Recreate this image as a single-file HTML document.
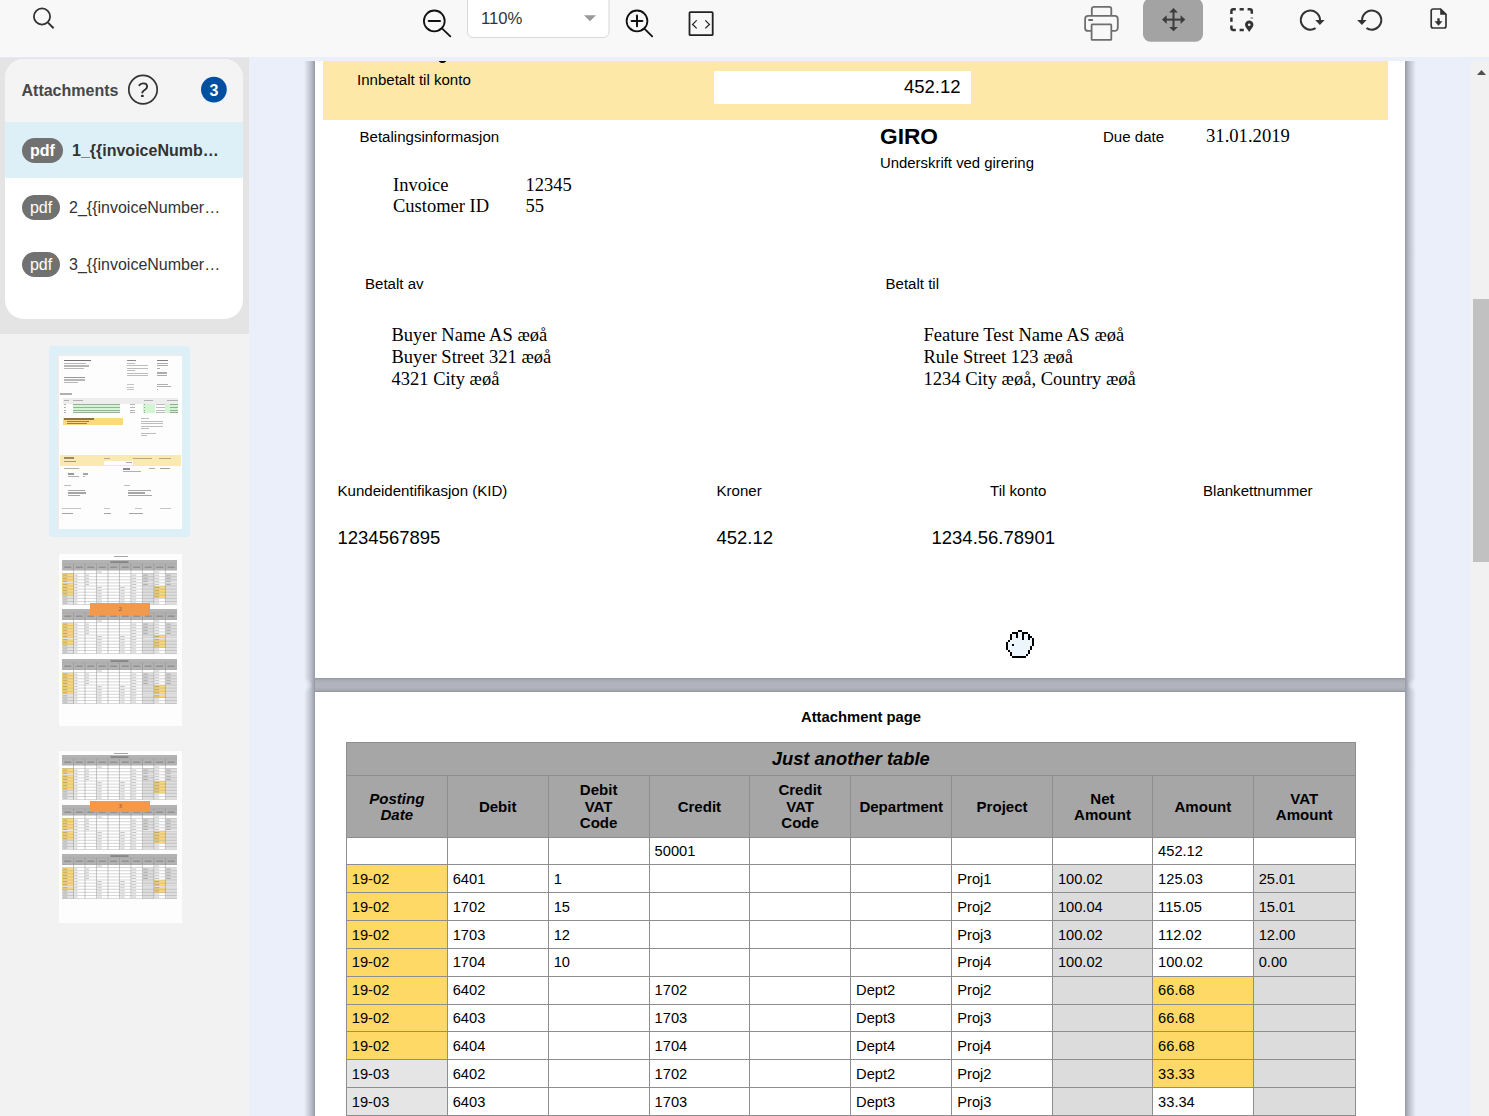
<!DOCTYPE html>
<html><head><meta charset="utf-8">
<style>
*{box-sizing:border-box;margin:0;padding:0}
html,body{width:1489px;height:1116px;overflow:hidden;background:#ebeffa;font-family:"Liberation Sans",sans-serif;color:#000}
.a{position:absolute}
.t{position:absolute;white-space:nowrap;line-height:1}
#tb{left:0;top:0;width:1489px;height:57px;background:#f8f8f8}
#sb{left:0;top:57px;width:249px;height:1059px;background:#f2f2f2}
#sbtop{left:0;top:57px;width:249px;height:277px;background:#e4e4e4}
#card{left:5px;top:59px;width:238px;height:260px;border-radius:19px;overflow:hidden;background:#fff}
#cardh{left:0;top:0;width:238px;height:63px;background:#f4f4f4}
.sel{left:0;top:63px;width:238px;height:56px;background:#ddf0f8}
.pill{position:absolute;height:25px;border-radius:12.5px;background:#717171;color:#fff;font-size:16px;line-height:25px;text-align:center}
.fname{position:absolute;font-size:16px;color:#333;line-height:1;white-space:nowrap}
/* main */
#main{left:249px;top:57px;width:1240px;height:1059px;background:#ebeffa;overflow:hidden}
.shadow{position:absolute}
#scroll{left:1471px;top:61px;width:18px;height:1055px;background:#f1f1f1}
#thumb{left:1473px;top:299px;width:16px;height:263px;background:#c1c1c1}
.page{position:absolute;background:#fff}
.sans{font-family:"Liberation Sans",sans-serif}
.serif{font-family:"Liberation Serif",serif}
</style></head>
<body>
<!-- toolbar -->
<div id="tb" class="a"></div>
<svg class="a" style="left:0;top:0" width="1489" height="57" viewBox="0 0 1489 57">
 <!-- search -->
 <g fill="none" stroke="#333" stroke-width="1.8">
  <circle cx="42" cy="16.5" r="8.1"/>
  <line x1="48" y1="22.6" x2="53.6" y2="28.2" stroke-linecap="butt" stroke-width="2"/>
 </g>
 <!-- zoom out -->
 <g fill="none" stroke="#111" stroke-width="1.8" stroke-linecap="round">
  <circle cx="434.3" cy="20.9" r="10.4"/>
  <line x1="428.7" y1="20.9" x2="440" y2="20.9" stroke-width="2"/>
  <line x1="442" y1="28.4" x2="450.3" y2="36.3"/>
 </g>
 <!-- zoom box -->
 <rect x="467.5" y="-6" width="141.5" height="43.5" rx="5.5" fill="#fff" stroke="#d9d9d9" stroke-width="1"/>
 <polygon points="584,15.2 596,15.2 590,21.2" fill="#9a9a9a"/>
 <!-- zoom in -->
 <g fill="none" stroke="#111" stroke-width="1.8" stroke-linecap="round">
  <circle cx="637" cy="20.9" r="10.4"/>
  <line x1="631.6" y1="20.9" x2="642.4" y2="20.9" stroke-width="2"/>
  <line x1="637" y1="15.5" x2="637" y2="26.3" stroke-width="2"/>
  <line x1="644.6" y1="28.8" x2="652.2" y2="36.3"/>
 </g>
 <!-- fit width -->
 <g fill="none" stroke="#222">
  <rect x="689.5" y="12.2" width="23.2" height="23" rx="0.8" stroke-width="1.8"/>
  <polyline points="696.7,20.4 692.6,24.4 696.7,28.4" stroke-width="1.3"/>
  <polyline points="705.3,20.4 709.4,24.4 705.3,28.4" stroke-width="1.3"/>
 </g>
 <!-- printer -->
 <g fill="none" stroke="#6e6e6e" stroke-width="1.8">
  <path d="M1091.8,15.9 V9 a2.2,2.2 0 0 1 2.2,-2.2 H1109.1 a2.2,2.2 0 0 1 2.2,2.2 V15.9"/>
  <path d="M1091.6,30.9 H1088.1 a3,3 0 0 1 -3,-3 V18.9 a3,3 0 0 1 3,-3 H1114.8 a3,3 0 0 1 3,3 V27.9 a3,3 0 0 1 -3,3 H1111.3"/>
  <rect x="1091.6" y="24.4" width="19.7" height="15.5" rx="0.6" fill="#f8f8f8"/>
  <line x1="1089" y1="20" x2="1092.2" y2="20" stroke-width="2" stroke-linecap="round"/>
 </g>
 <!-- move (active) -->
 <rect x="1143" y="-1.5" width="60" height="43.3" rx="7.5" fill="#a3a3a3"/>
 <g fill="#3c3c3c">
  <rect x="1172.5" y="11.5" width="2" height="16.5"/>
  <rect x="1165.5" y="18.6" width="16" height="2"/>
  <polygon points="1173.5,8 1169.1,12.6 1177.9,12.6"/>
  <polygon points="1173.5,31.3 1169.1,26.9 1177.9,26.9"/>
  <polygon points="1162,19.6 1166.7,15.2 1166.7,24"/>
  <polygon points="1185.3,19.6 1180.6,15.2 1180.6,24"/>
 </g>
 <!-- select area -->
 <g fill="none" stroke="#333" stroke-width="2.5">
  <path d="M1231.4,13.9 V11.2 a1.9,1.9 0 0 1 1.9,-1.9 H1235.8"/>
  <path d="M1239.6,9.3 H1243.8"/>
  <path d="M1247.6,9.3 H1249.9 a1.9,1.9 0 0 1 1.9,1.9 V13.8"/>
  <path d="M1231.4,17.5 V21.8"/>
  <path d="M1231.4,25.6 V28.1 a1.9,1.9 0 0 0 1.9,1.9 H1235.8"/>
  <path d="M1239.6,30 H1243.8"/>
  <path d="M1251.8,17.6 V18.4"/>
 </g>
 <path d="M1249.2,32 C1247.6,29.4 1245,27 1245,24.8 a4.2,4.2 0 0 1 8.4,0 C1253.4,27 1250.8,29.4 1249.2,32 Z" fill="#333"/>
 <circle cx="1249.2" cy="24.8" r="1.3" fill="#f8f8f8"/>
 <!-- rotate cw -->
 <g fill="none" stroke="#333" stroke-width="2">
  <path d="M1315.6,28.2 A9.6,9.6 0 1 1 1320,20.1"/>
 </g>
 <polygon points="1315.2,20.1 1324.6,20.1 1319.9,24.9" fill="#333"/>
 <!-- rotate ccw -->
 <g fill="none" stroke="#333" stroke-width="2">
  <path d="M1366.5,28.2 A9.6,9.6 0 1 0 1362.1,20.1"/>
 </g>
 <polygon points="1357.2,20.1 1366.6,20.1 1361.9,24.9" fill="#333"/>
 <!-- download -->
 <g fill="none" stroke="#333" stroke-width="1.7" stroke-linejoin="round">
  <path d="M1440.6,9 H1433.2 a2,2 0 0 0 -2,2 V26 a2,2 0 0 0 2,2 H1444 a2,2 0 0 0 2,-2 V14.4 Z"/>
 </g>
 <polygon points="1440.2,8.6 1446.6,14.8 1440.2,14.8" fill="#333"/>
 <rect x="1437.3" y="18.3" width="2.4" height="4.5" fill="#333"/>
 <polygon points="1434.5,21.3 1442.5,21.3 1438.5,25.8" fill="#333"/>
</svg>
<div class="t" style="left:481px;top:10.5px;font-size:16.7px;color:#333">110%</div>

<!-- sidebar -->
<div id="sb" class="a"></div>
<div id="sbtop" class="a"></div>
<div class="a" style="left:0;top:57px;width:249px;height:1px;background:#e6e9f0"></div>
<div id="card" class="a">
  <div id="cardh" class="a"></div>
  <div class="a sel"></div>
</div>
<div class="t" style="left:21.5px;top:83.3px;font-size:16px;font-weight:700;color:#474747">Attachments</div>
<svg class="a" style="left:125px;top:72px" width="110" height="36" viewBox="125 72 110 36">
 <circle cx="143" cy="89.6" r="14.2" fill="none" stroke="#333" stroke-width="1.7"/>
 <circle cx="213.9" cy="89.6" r="12.9" fill="#0050a1"/>
 <path d="M139.4,85.2 C140.5,83.9 142,83.4 143.5,83.4 C145.7,83.4 147.1,84.8 147.1,86.7 C147.1,88.4 145.9,89.2 144.6,90 C143.3,90.8 142.6,91.6 142.3,92.6" fill="none" stroke="#2e2e2e" stroke-width="1.9" stroke-linecap="round"/>
 <ellipse cx="142.4" cy="95.9" rx="1.5" ry="1.2" fill="#2e2e2e"/>
</svg>

<div class="t" style="left:209.5px;top:82.5px;font-size:16px;font-weight:700;color:#fff">3</div>
<div class="pill" style="left:22px;top:138px;width:41px;font-weight:700">pdf</div>
<div class="fname" style="left:72px;top:143px;font-weight:700">1_{{invoiceNumb…</div>
<div class="pill" style="left:22px;top:195px;width:38px">pdf</div>
<div class="fname" style="left:69px;top:200px">2_{{invoiceNumber…</div>
<div class="pill" style="left:22px;top:252px;width:38px">pdf</div>
<div class="fname" style="left:69px;top:257px">3_{{invoiceNumber…</div>

<!--THUMBS-->
<div class="a" style="left:49.00px;top:346.00px;width:141.00px;height:191.00px;background:#ddf0f8;border-radius:3px"></div>
<div class="a" style="left:57.00px;top:354.00px;width:125.00px;height:175.00px;background:#ececec;"></div>
<div class="a" style="left:58.50px;top:355.50px;width:123.50px;height:173.50px;background:#fdfdfd;"></div>
<div class="a" style="left:63.70px;top:359.60px;width:27.10px;height:1.70px;background:rgba(0,0,0,.55);"></div>
<div class="a" style="left:63.70px;top:362.80px;width:22.30px;height:1.30px;background:rgba(0,0,0,.28);"></div>
<div class="a" style="left:63.70px;top:365.30px;width:25.80px;height:1.30px;background:rgba(0,0,0,.28);"></div>
<div class="a" style="left:63.70px;top:367.70px;width:20.10px;height:1.30px;background:rgba(0,0,0,.28);"></div>
<div class="a" style="left:63.70px;top:376.80px;width:21.40px;height:1.50px;background:rgba(0,0,0,.4);"></div>
<div class="a" style="left:63.70px;top:379.30px;width:21.00px;height:1.30px;background:rgba(0,0,0,.28);"></div>
<div class="a" style="left:63.70px;top:381.60px;width:14.50px;height:1.30px;background:rgba(0,0,0,.28);"></div>
<div class="a" style="left:127.10px;top:362.90px;width:8.00px;height:1.20px;background:rgba(0,0,0,.25);"></div>
<div class="a" style="left:127.10px;top:365.30px;width:20.50px;height:1.20px;background:rgba(0,0,0,.25);"></div>
<div class="a" style="left:127.10px;top:367.70px;width:20.50px;height:1.20px;background:rgba(0,0,0,.25);"></div>
<div class="a" style="left:127.10px;top:370.00px;width:8.00px;height:1.20px;background:rgba(0,0,0,.25);"></div>
<div class="a" style="left:127.10px;top:372.50px;width:20.50px;height:1.20px;background:rgba(0,0,0,.25);"></div>
<div class="a" style="left:127.10px;top:374.80px;width:20.50px;height:1.20px;background:rgba(0,0,0,.25);"></div>
<div class="a" style="left:127.10px;top:359.60px;width:9.20px;height:1.50px;background:rgba(0,0,0,.45);"></div>
<div class="a" style="left:157.20px;top:359.50px;width:11.00px;height:1.60px;background:rgba(0,0,0,.5);"></div>
<div class="a" style="left:157.20px;top:362.70px;width:11.00px;height:1.30px;background:rgba(0,0,0,.32);"></div>
<div class="a" style="left:157.20px;top:365.10px;width:10.50px;height:1.30px;background:rgba(0,0,0,.32);"></div>
<div class="a" style="left:157.20px;top:367.50px;width:3.00px;height:1.30px;background:rgba(0,0,0,.32);"></div>
<div class="a" style="left:157.20px;top:372.40px;width:10.00px;height:1.30px;background:rgba(0,0,0,.32);"></div>
<div class="a" style="left:157.20px;top:374.80px;width:9.50px;height:1.30px;background:rgba(0,0,0,.32);"></div>
<div class="a" style="left:127.10px;top:384.20px;width:7.30px;height:1.10px;background:rgba(0,0,0,.22);"></div>
<div class="a" style="left:127.10px;top:386.60px;width:7.30px;height:1.10px;background:rgba(0,0,0,.22);"></div>
<div class="a" style="left:127.10px;top:389.00px;width:7.30px;height:1.10px;background:rgba(0,0,0,.22);"></div>
<div class="a" style="left:157.20px;top:383.80px;width:10.50px;height:1.20px;background:rgba(0,0,0,.3);"></div>
<div class="a" style="left:157.20px;top:386.30px;width:13.50px;height:1.20px;background:rgba(0,0,0,.3);"></div>
<div class="a" style="left:157.20px;top:388.80px;width:1.00px;height:1.20px;background:rgba(0,0,0,.3);"></div>
<div class="a" style="left:59.80px;top:393.40px;width:12.70px;height:1.50px;background:rgba(0,0,0,.3);"></div>
<div class="a" style="left:62.90px;top:398.00px;width:115.20px;height:5.70px;background:#ededed;"></div>
<div class="a" style="left:72.90px;top:403.70px;width:47.60px;height:9.20px;background:#d3f5d3;"></div>
<div class="a" style="left:143.20px;top:403.70px;width:11.80px;height:9.20px;background:#d3f5d3;"></div>
<div class="a" style="left:164.60px;top:403.70px;width:13.50px;height:9.20px;background:#d3f5d3;"></div>
<div class="a" style="left:63.70px;top:404.40px;width:2.50px;height:1.00px;background:rgba(0,0,0,.3);"></div>
<div class="a" style="left:73.20px;top:404.40px;width:47.00px;height:1.00px;background:rgba(0,0,0,.28);"></div>
<div class="a" style="left:129.80px;top:404.40px;width:5.50px;height:1.00px;background:rgba(0,0,0,.28);"></div>
<div class="a" style="left:143.50px;top:404.40px;width:1.50px;height:1.00px;background:rgba(0,0,0,.3);"></div>
<div class="a" style="left:156.00px;top:404.40px;width:8.50px;height:1.00px;background:rgba(0,0,0,.25);"></div>
<div class="a" style="left:169.50px;top:404.40px;width:8.50px;height:1.00px;background:rgba(0,0,0,.3);"></div>
<div class="a" style="left:63.70px;top:407.00px;width:2.50px;height:1.00px;background:rgba(0,0,0,.3);"></div>
<div class="a" style="left:73.20px;top:407.00px;width:47.00px;height:1.00px;background:rgba(0,0,0,.28);"></div>
<div class="a" style="left:129.80px;top:407.00px;width:5.50px;height:1.00px;background:rgba(0,0,0,.28);"></div>
<div class="a" style="left:143.50px;top:407.00px;width:1.50px;height:1.00px;background:rgba(0,0,0,.3);"></div>
<div class="a" style="left:156.00px;top:407.00px;width:8.50px;height:1.00px;background:rgba(0,0,0,.25);"></div>
<div class="a" style="left:169.50px;top:407.00px;width:8.50px;height:1.00px;background:rgba(0,0,0,.3);"></div>
<div class="a" style="left:63.70px;top:409.60px;width:2.50px;height:1.00px;background:rgba(0,0,0,.3);"></div>
<div class="a" style="left:73.20px;top:409.60px;width:47.00px;height:1.00px;background:rgba(0,0,0,.28);"></div>
<div class="a" style="left:129.80px;top:409.60px;width:5.50px;height:1.00px;background:rgba(0,0,0,.28);"></div>
<div class="a" style="left:143.50px;top:409.60px;width:1.50px;height:1.00px;background:rgba(0,0,0,.3);"></div>
<div class="a" style="left:156.00px;top:409.60px;width:8.50px;height:1.00px;background:rgba(0,0,0,.25);"></div>
<div class="a" style="left:169.50px;top:409.60px;width:8.50px;height:1.00px;background:rgba(0,0,0,.3);"></div>
<div class="a" style="left:63.70px;top:411.70px;width:2.50px;height:1.00px;background:rgba(0,0,0,.3);"></div>
<div class="a" style="left:73.20px;top:411.70px;width:47.00px;height:1.00px;background:rgba(0,0,0,.28);"></div>
<div class="a" style="left:129.80px;top:411.70px;width:5.50px;height:1.00px;background:rgba(0,0,0,.28);"></div>
<div class="a" style="left:143.50px;top:411.70px;width:1.50px;height:1.00px;background:rgba(0,0,0,.3);"></div>
<div class="a" style="left:156.00px;top:411.70px;width:8.50px;height:1.00px;background:rgba(0,0,0,.25);"></div>
<div class="a" style="left:169.50px;top:411.70px;width:8.50px;height:1.00px;background:rgba(0,0,0,.3);"></div>
<div class="a" style="left:63.50px;top:400.00px;width:5.00px;height:1.20px;background:rgba(0,0,0,.25);"></div>
<div class="a" style="left:73.00px;top:400.00px;width:10.00px;height:1.20px;background:rgba(0,0,0,.25);"></div>
<div class="a" style="left:143.50px;top:400.00px;width:9.00px;height:1.20px;background:rgba(0,0,0,.25);"></div>
<div class="a" style="left:167.00px;top:400.00px;width:11.00px;height:1.20px;background:rgba(0,0,0,.25);"></div>
<div class="a" style="left:63.30px;top:417.70px;width:59.40px;height:7.40px;background:#fdd97e;"></div>
<div class="a" style="left:64.30px;top:418.40px;width:30.00px;height:1.30px;background:rgba(0,0,0,.45);"></div>
<div class="a" style="left:67.00px;top:420.80px;width:22.00px;height:1.10px;background:rgba(0,0,0,.4);"></div>
<div class="a" style="left:67.00px;top:423.00px;width:20.00px;height:1.10px;background:rgba(0,0,0,.4);"></div>
<div class="a" style="left:141.00px;top:418.30px;width:8.00px;height:1.10px;background:rgba(0,0,0,.25);"></div>
<div class="a" style="left:141.00px;top:420.80px;width:21.50px;height:1.10px;background:rgba(0,0,0,.25);"></div>
<div class="a" style="left:141.00px;top:423.20px;width:21.50px;height:1.10px;background:rgba(0,0,0,.25);"></div>
<div class="a" style="left:141.00px;top:425.60px;width:21.50px;height:1.10px;background:rgba(0,0,0,.25);"></div>
<div class="a" style="left:141.00px;top:428.00px;width:8.00px;height:1.10px;background:rgba(0,0,0,.25);"></div>
<div class="a" style="left:141.00px;top:432.50px;width:15.00px;height:1.10px;background:rgba(0,0,0,.25);"></div>
<div class="a" style="left:141.00px;top:434.80px;width:6.00px;height:1.10px;background:rgba(0,0,0,.25);"></div>
<div class="a" style="left:60.00px;top:454.80px;width:120.80px;height:11.40px;background:#fbe9b2;"></div>
<div class="a" style="left:63.70px;top:457.00px;width:10.00px;height:2.00px;background:rgba(0,0,0,.4);"></div>
<div class="a" style="left:63.70px;top:461.00px;width:12.50px;height:1.30px;background:rgba(0,0,0,.35);"></div>
<div class="a" style="left:104.30px;top:461.00px;width:28.90px;height:3.50px;background:#ffffff;"></div>
<div class="a" style="left:125.80px;top:461.70px;width:6.50px;height:1.70px;background:rgba(0,0,0,.35);"></div>
<div class="a" style="left:104.30px;top:458.20px;width:5.50px;height:1.20px;background:rgba(0,0,0,.28);"></div>
<div class="a" style="left:133.10px;top:458.20px;width:18.70px;height:1.20px;background:rgba(0,0,0,.28);"></div>
<div class="a" style="left:159.40px;top:458.20px;width:11.70px;height:1.20px;background:rgba(0,0,0,.28);"></div>
<div class="a" style="left:63.70px;top:468.00px;width:15.80px;height:1.40px;background:rgba(0,0,0,.3);"></div>
<div class="a" style="left:123.10px;top:467.80px;width:6.50px;height:1.80px;background:rgba(0,0,0,.45);"></div>
<div class="a" style="left:148.50px;top:468.10px;width:6.50px;height:1.20px;background:rgba(0,0,0,.3);"></div>
<div class="a" style="left:160.30px;top:467.80px;width:9.50px;height:1.70px;background:rgba(0,0,0,.35);"></div>
<div class="a" style="left:123.10px;top:471.00px;width:17.50px;height:1.20px;background:rgba(0,0,0,.3);"></div>
<div class="a" style="left:68.00px;top:473.20px;width:6.00px;height:1.70px;background:rgba(0,0,0,.4);"></div>
<div class="a" style="left:83.00px;top:473.20px;width:5.00px;height:1.50px;background:rgba(0,0,0,.35);"></div>
<div class="a" style="left:67.50px;top:475.60px;width:11.00px;height:1.20px;background:rgba(0,0,0,.3);"></div>
<div class="a" style="left:83.00px;top:475.60px;width:2.00px;height:1.20px;background:rgba(0,0,0,.3);"></div>
<div class="a" style="left:64.20px;top:484.50px;width:7.00px;height:1.20px;background:rgba(0,0,0,.25);"></div>
<div class="a" style="left:123.60px;top:484.50px;width:6.20px;height:1.20px;background:rgba(0,0,0,.25);"></div>
<div class="a" style="left:67.70px;top:489.80px;width:17.50px;height:1.40px;background:rgba(0,0,0,.35);"></div>
<div class="a" style="left:127.50px;top:489.80px;width:23.50px;height:1.40px;background:rgba(0,0,0,.35);"></div>
<div class="a" style="left:67.70px;top:492.30px;width:18.50px;height:1.40px;background:rgba(0,0,0,.35);"></div>
<div class="a" style="left:127.50px;top:492.30px;width:17.00px;height:1.40px;background:rgba(0,0,0,.35);"></div>
<div class="a" style="left:67.70px;top:494.70px;width:12.00px;height:1.40px;background:rgba(0,0,0,.35);"></div>
<div class="a" style="left:127.50px;top:494.70px;width:24.00px;height:1.40px;background:rgba(0,0,0,.35);"></div>
<div class="a" style="left:61.50px;top:507.60px;width:19.00px;height:1.20px;background:rgba(0,0,0,.22);"></div>
<div class="a" style="left:104.30px;top:507.60px;width:5.40px;height:1.20px;background:rgba(0,0,0,.22);"></div>
<div class="a" style="left:135.40px;top:507.60px;width:6.50px;height:1.20px;background:rgba(0,0,0,.22);"></div>
<div class="a" style="left:159.80px;top:507.60px;width:11.70px;height:1.20px;background:rgba(0,0,0,.22);"></div>
<div class="a" style="left:62.00px;top:512.50px;width:11.00px;height:1.50px;background:rgba(0,0,0,.35);"></div>
<div class="a" style="left:104.30px;top:512.50px;width:7.00px;height:1.50px;background:rgba(0,0,0,.35);"></div>
<div class="a" style="left:128.80px;top:512.50px;width:13.90px;height:1.50px;background:rgba(0,0,0,.35);"></div>
<div class="a" style="left:58.90px;top:553.90px;width:122.70px;height:172.00px;background:#fdfdfd;"></div>
<div class="a" style="left:114.40px;top:555.70px;width:13.50px;height:1.50px;background:rgba(0,0,0,.35);"></div>
<div class="a" style="left:62.40px;top:559.60px;width:114.90px;height:10.50px;background:#b3b3b3;"></div>
<div class="a" style="left:62.40px;top:570.10px;width:11.49px;height:3.10px;background:#fff;"></div>
<div class="a" style="left:73.89px;top:570.10px;width:11.49px;height:3.10px;background:#fff;"></div>
<div class="a" style="left:85.38px;top:570.10px;width:11.49px;height:3.10px;background:#fff;"></div>
<div class="a" style="left:96.87px;top:570.10px;width:11.49px;height:3.10px;background:#fff;"></div>
<div class="a" style="left:108.36px;top:570.10px;width:11.49px;height:3.10px;background:#fff;"></div>
<div class="a" style="left:119.85px;top:570.10px;width:11.49px;height:3.10px;background:#fff;"></div>
<div class="a" style="left:131.34px;top:570.10px;width:11.49px;height:3.10px;background:#fff;"></div>
<div class="a" style="left:142.83px;top:570.10px;width:11.49px;height:3.10px;background:#fff;"></div>
<div class="a" style="left:154.32px;top:570.10px;width:11.49px;height:3.10px;background:#fff;"></div>
<div class="a" style="left:165.81px;top:570.10px;width:11.49px;height:3.10px;background:#fff;"></div>
<div class="a" style="left:62.40px;top:573.20px;width:11.49px;height:3.10px;background:#fcd878;"></div>
<div class="a" style="left:73.89px;top:573.20px;width:11.49px;height:3.10px;background:#fff;"></div>
<div class="a" style="left:85.38px;top:573.20px;width:11.49px;height:3.10px;background:#fff;"></div>
<div class="a" style="left:96.87px;top:573.20px;width:11.49px;height:3.10px;background:#fff;"></div>
<div class="a" style="left:108.36px;top:573.20px;width:11.49px;height:3.10px;background:#fff;"></div>
<div class="a" style="left:119.85px;top:573.20px;width:11.49px;height:3.10px;background:#fff;"></div>
<div class="a" style="left:131.34px;top:573.20px;width:11.49px;height:3.10px;background:#fff;"></div>
<div class="a" style="left:142.83px;top:573.20px;width:11.49px;height:3.10px;background:#dedede;"></div>
<div class="a" style="left:154.32px;top:573.20px;width:11.49px;height:3.10px;background:#fff;"></div>
<div class="a" style="left:165.81px;top:573.20px;width:11.49px;height:3.10px;background:#dedede;"></div>
<div class="a" style="left:62.40px;top:576.30px;width:11.49px;height:3.10px;background:#fcd878;"></div>
<div class="a" style="left:73.89px;top:576.30px;width:11.49px;height:3.10px;background:#fff;"></div>
<div class="a" style="left:85.38px;top:576.30px;width:11.49px;height:3.10px;background:#fff;"></div>
<div class="a" style="left:96.87px;top:576.30px;width:11.49px;height:3.10px;background:#fff;"></div>
<div class="a" style="left:108.36px;top:576.30px;width:11.49px;height:3.10px;background:#fff;"></div>
<div class="a" style="left:119.85px;top:576.30px;width:11.49px;height:3.10px;background:#fff;"></div>
<div class="a" style="left:131.34px;top:576.30px;width:11.49px;height:3.10px;background:#fff;"></div>
<div class="a" style="left:142.83px;top:576.30px;width:11.49px;height:3.10px;background:#dedede;"></div>
<div class="a" style="left:154.32px;top:576.30px;width:11.49px;height:3.10px;background:#fff;"></div>
<div class="a" style="left:165.81px;top:576.30px;width:11.49px;height:3.10px;background:#dedede;"></div>
<div class="a" style="left:62.40px;top:579.40px;width:11.49px;height:3.10px;background:#fcd878;"></div>
<div class="a" style="left:73.89px;top:579.40px;width:11.49px;height:3.10px;background:#fff;"></div>
<div class="a" style="left:85.38px;top:579.40px;width:11.49px;height:3.10px;background:#fff;"></div>
<div class="a" style="left:96.87px;top:579.40px;width:11.49px;height:3.10px;background:#fff;"></div>
<div class="a" style="left:108.36px;top:579.40px;width:11.49px;height:3.10px;background:#fff;"></div>
<div class="a" style="left:119.85px;top:579.40px;width:11.49px;height:3.10px;background:#fff;"></div>
<div class="a" style="left:131.34px;top:579.40px;width:11.49px;height:3.10px;background:#fff;"></div>
<div class="a" style="left:142.83px;top:579.40px;width:11.49px;height:3.10px;background:#dedede;"></div>
<div class="a" style="left:154.32px;top:579.40px;width:11.49px;height:3.10px;background:#fff;"></div>
<div class="a" style="left:165.81px;top:579.40px;width:11.49px;height:3.10px;background:#dedede;"></div>
<div class="a" style="left:62.40px;top:582.50px;width:11.49px;height:3.10px;background:#fcd878;"></div>
<div class="a" style="left:73.89px;top:582.50px;width:11.49px;height:3.10px;background:#fff;"></div>
<div class="a" style="left:85.38px;top:582.50px;width:11.49px;height:3.10px;background:#fff;"></div>
<div class="a" style="left:96.87px;top:582.50px;width:11.49px;height:3.10px;background:#fff;"></div>
<div class="a" style="left:108.36px;top:582.50px;width:11.49px;height:3.10px;background:#fff;"></div>
<div class="a" style="left:119.85px;top:582.50px;width:11.49px;height:3.10px;background:#fff;"></div>
<div class="a" style="left:131.34px;top:582.50px;width:11.49px;height:3.10px;background:#fff;"></div>
<div class="a" style="left:142.83px;top:582.50px;width:11.49px;height:3.10px;background:#dedede;"></div>
<div class="a" style="left:154.32px;top:582.50px;width:11.49px;height:3.10px;background:#fff;"></div>
<div class="a" style="left:165.81px;top:582.50px;width:11.49px;height:3.10px;background:#dedede;"></div>
<div class="a" style="left:62.40px;top:585.60px;width:11.49px;height:3.10px;background:#fcd878;"></div>
<div class="a" style="left:73.89px;top:585.60px;width:11.49px;height:3.10px;background:#fff;"></div>
<div class="a" style="left:85.38px;top:585.60px;width:11.49px;height:3.10px;background:#fff;"></div>
<div class="a" style="left:96.87px;top:585.60px;width:11.49px;height:3.10px;background:#fff;"></div>
<div class="a" style="left:108.36px;top:585.60px;width:11.49px;height:3.10px;background:#fff;"></div>
<div class="a" style="left:119.85px;top:585.60px;width:11.49px;height:3.10px;background:#fff;"></div>
<div class="a" style="left:131.34px;top:585.60px;width:11.49px;height:3.10px;background:#fff;"></div>
<div class="a" style="left:142.83px;top:585.60px;width:11.49px;height:3.10px;background:#dedede;"></div>
<div class="a" style="left:154.32px;top:585.60px;width:11.49px;height:3.10px;background:#fcd878;"></div>
<div class="a" style="left:165.81px;top:585.60px;width:11.49px;height:3.10px;background:#dedede;"></div>
<div class="a" style="left:62.40px;top:588.70px;width:11.49px;height:3.10px;background:#fcd878;"></div>
<div class="a" style="left:73.89px;top:588.70px;width:11.49px;height:3.10px;background:#fff;"></div>
<div class="a" style="left:85.38px;top:588.70px;width:11.49px;height:3.10px;background:#fff;"></div>
<div class="a" style="left:96.87px;top:588.70px;width:11.49px;height:3.10px;background:#fff;"></div>
<div class="a" style="left:108.36px;top:588.70px;width:11.49px;height:3.10px;background:#fff;"></div>
<div class="a" style="left:119.85px;top:588.70px;width:11.49px;height:3.10px;background:#fff;"></div>
<div class="a" style="left:131.34px;top:588.70px;width:11.49px;height:3.10px;background:#fff;"></div>
<div class="a" style="left:142.83px;top:588.70px;width:11.49px;height:3.10px;background:#dedede;"></div>
<div class="a" style="left:154.32px;top:588.70px;width:11.49px;height:3.10px;background:#fcd878;"></div>
<div class="a" style="left:165.81px;top:588.70px;width:11.49px;height:3.10px;background:#dedede;"></div>
<div class="a" style="left:62.40px;top:591.80px;width:11.49px;height:3.10px;background:#fcd878;"></div>
<div class="a" style="left:73.89px;top:591.80px;width:11.49px;height:3.10px;background:#fff;"></div>
<div class="a" style="left:85.38px;top:591.80px;width:11.49px;height:3.10px;background:#fff;"></div>
<div class="a" style="left:96.87px;top:591.80px;width:11.49px;height:3.10px;background:#fff;"></div>
<div class="a" style="left:108.36px;top:591.80px;width:11.49px;height:3.10px;background:#fff;"></div>
<div class="a" style="left:119.85px;top:591.80px;width:11.49px;height:3.10px;background:#fff;"></div>
<div class="a" style="left:131.34px;top:591.80px;width:11.49px;height:3.10px;background:#fff;"></div>
<div class="a" style="left:142.83px;top:591.80px;width:11.49px;height:3.10px;background:#dedede;"></div>
<div class="a" style="left:154.32px;top:591.80px;width:11.49px;height:3.10px;background:#fcd878;"></div>
<div class="a" style="left:165.81px;top:591.80px;width:11.49px;height:3.10px;background:#dedede;"></div>
<div class="a" style="left:62.40px;top:594.90px;width:11.49px;height:3.10px;background:#e3e3e3;"></div>
<div class="a" style="left:73.89px;top:594.90px;width:11.49px;height:3.10px;background:#fff;"></div>
<div class="a" style="left:85.38px;top:594.90px;width:11.49px;height:3.10px;background:#fff;"></div>
<div class="a" style="left:96.87px;top:594.90px;width:11.49px;height:3.10px;background:#fff;"></div>
<div class="a" style="left:108.36px;top:594.90px;width:11.49px;height:3.10px;background:#fff;"></div>
<div class="a" style="left:119.85px;top:594.90px;width:11.49px;height:3.10px;background:#fff;"></div>
<div class="a" style="left:131.34px;top:594.90px;width:11.49px;height:3.10px;background:#fff;"></div>
<div class="a" style="left:142.83px;top:594.90px;width:11.49px;height:3.10px;background:#dedede;"></div>
<div class="a" style="left:154.32px;top:594.90px;width:11.49px;height:3.10px;background:#fcd878;"></div>
<div class="a" style="left:165.81px;top:594.90px;width:11.49px;height:3.10px;background:#dedede;"></div>
<div class="a" style="left:62.40px;top:598.00px;width:11.49px;height:3.10px;background:#e3e3e3;"></div>
<div class="a" style="left:73.89px;top:598.00px;width:11.49px;height:3.10px;background:#fff;"></div>
<div class="a" style="left:85.38px;top:598.00px;width:11.49px;height:3.10px;background:#fff;"></div>
<div class="a" style="left:96.87px;top:598.00px;width:11.49px;height:3.10px;background:#fff;"></div>
<div class="a" style="left:108.36px;top:598.00px;width:11.49px;height:3.10px;background:#fff;"></div>
<div class="a" style="left:119.85px;top:598.00px;width:11.49px;height:3.10px;background:#fff;"></div>
<div class="a" style="left:131.34px;top:598.00px;width:11.49px;height:3.10px;background:#fff;"></div>
<div class="a" style="left:142.83px;top:598.00px;width:11.49px;height:3.10px;background:#dedede;"></div>
<div class="a" style="left:154.32px;top:598.00px;width:11.49px;height:3.10px;background:#fff;"></div>
<div class="a" style="left:165.81px;top:598.00px;width:11.49px;height:3.10px;background:#dedede;"></div>
<div class="a" style="left:62.40px;top:601.10px;width:11.49px;height:3.10px;background:#e3e3e3;"></div>
<div class="a" style="left:73.89px;top:601.10px;width:11.49px;height:3.10px;background:#fff;"></div>
<div class="a" style="left:85.38px;top:601.10px;width:11.49px;height:3.10px;background:#fff;"></div>
<div class="a" style="left:96.87px;top:601.10px;width:11.49px;height:3.10px;background:#fff;"></div>
<div class="a" style="left:108.36px;top:601.10px;width:11.49px;height:3.10px;background:#fff;"></div>
<div class="a" style="left:119.85px;top:601.10px;width:11.49px;height:3.10px;background:#fff;"></div>
<div class="a" style="left:131.34px;top:601.10px;width:11.49px;height:3.10px;background:#fff;"></div>
<div class="a" style="left:142.83px;top:601.10px;width:11.49px;height:3.10px;background:#dedede;"></div>
<div class="a" style="left:154.32px;top:601.10px;width:11.49px;height:3.10px;background:#fff;"></div>
<div class="a" style="left:165.81px;top:601.10px;width:11.49px;height:3.10px;background:#dedede;"></div>
<svg class="a" style="left:62.4px;top:559.6px" width="114.9" height="45" viewBox="0 0 114.9 45"><line x1="11.49" y1="3.9" x2="11.49" y2="44.6" stroke="#8a8a8a" stroke-width=".5"/><line x1="22.98" y1="3.9" x2="22.98" y2="44.6" stroke="#8a8a8a" stroke-width=".5"/><line x1="34.47" y1="3.9" x2="34.47" y2="44.6" stroke="#8a8a8a" stroke-width=".5"/><line x1="45.96" y1="3.9" x2="45.96" y2="44.6" stroke="#8a8a8a" stroke-width=".5"/><line x1="57.45" y1="3.9" x2="57.45" y2="44.6" stroke="#8a8a8a" stroke-width=".5"/><line x1="68.94" y1="3.9" x2="68.94" y2="44.6" stroke="#8a8a8a" stroke-width=".5"/><line x1="80.43" y1="3.9" x2="80.43" y2="44.6" stroke="#8a8a8a" stroke-width=".5"/><line x1="91.92" y1="3.9" x2="91.92" y2="44.6" stroke="#8a8a8a" stroke-width=".5"/><line x1="103.41" y1="3.9" x2="103.41" y2="44.6" stroke="#8a8a8a" stroke-width=".5"/><line x1="0" y1="10.50" x2="114.9" y2="10.50" stroke="#a0a0a0" stroke-width=".45"/><line x1="0" y1="13.60" x2="114.9" y2="13.60" stroke="#a0a0a0" stroke-width=".45"/><line x1="0" y1="16.70" x2="114.9" y2="16.70" stroke="#a0a0a0" stroke-width=".45"/><line x1="0" y1="19.80" x2="114.9" y2="19.80" stroke="#a0a0a0" stroke-width=".45"/><line x1="0" y1="22.90" x2="114.9" y2="22.90" stroke="#a0a0a0" stroke-width=".45"/><line x1="0" y1="26.00" x2="114.9" y2="26.00" stroke="#a0a0a0" stroke-width=".45"/><line x1="0" y1="29.10" x2="114.9" y2="29.10" stroke="#a0a0a0" stroke-width=".45"/><line x1="0" y1="32.20" x2="114.9" y2="32.20" stroke="#a0a0a0" stroke-width=".45"/><line x1="0" y1="35.30" x2="114.9" y2="35.30" stroke="#a0a0a0" stroke-width=".45"/><line x1="0" y1="38.40" x2="114.9" y2="38.40" stroke="#a0a0a0" stroke-width=".45"/><line x1="0" y1="41.50" x2="114.9" y2="41.50" stroke="#a0a0a0" stroke-width=".45"/><line x1="0" y1="44.60" x2="114.9" y2="44.60" stroke="#a0a0a0" stroke-width=".45"/><line x1="0" y1="3.9" x2="114.9" y2="3.9" stroke="#999" stroke-width=".35"/><rect x="48.45" y="1.4" width="18" height="1.3" fill="rgba(0,0,0,.35)"/><rect x="2.25" y="6.5" width="7" height="1.4" fill="rgba(0,0,0,.2)"/><rect x="13.73" y="6.5" width="7" height="1.4" fill="rgba(0,0,0,.2)"/><rect x="25.23" y="6.5" width="7" height="1.4" fill="rgba(0,0,0,.2)"/><rect x="36.71" y="6.5" width="7" height="1.4" fill="rgba(0,0,0,.2)"/><rect x="48.20" y="6.5" width="7" height="1.4" fill="rgba(0,0,0,.2)"/><rect x="59.70" y="6.5" width="7" height="1.4" fill="rgba(0,0,0,.2)"/><rect x="71.19" y="6.5" width="7" height="1.4" fill="rgba(0,0,0,.2)"/><rect x="82.68" y="6.5" width="7" height="1.4" fill="rgba(0,0,0,.2)"/><rect x="94.17" y="6.5" width="7" height="1.4" fill="rgba(0,0,0,.2)"/><rect x="105.66" y="6.5" width="7" height="1.4" fill="rgba(0,0,0,.2)"/><rect x="35.27" y="11.50" width="4.5" height="1.1" fill="rgba(0,0,0,.22)"/><rect x="92.72" y="11.50" width="4.5" height="1.1" fill="rgba(0,0,0,.22)"/><rect x="0.80" y="14.60" width="4.5" height="1.1" fill="rgba(0,0,0,.22)"/><rect x="12.29" y="14.60" width="3.2" height="1.1" fill="rgba(0,0,0,.22)"/><rect x="23.78" y="14.60" width="3.2" height="1.1" fill="rgba(0,0,0,.22)"/><rect x="69.74" y="14.60" width="4.5" height="1.1" fill="rgba(0,0,0,.22)"/><rect x="81.23" y="14.60" width="4.5" height="1.1" fill="rgba(0,0,0,.22)"/><rect x="92.72" y="14.60" width="4.5" height="1.1" fill="rgba(0,0,0,.22)"/><rect x="104.21" y="14.60" width="4.5" height="1.1" fill="rgba(0,0,0,.22)"/><rect x="0.80" y="17.70" width="4.5" height="1.1" fill="rgba(0,0,0,.22)"/><rect x="12.29" y="17.70" width="3.2" height="1.1" fill="rgba(0,0,0,.22)"/><rect x="23.78" y="17.70" width="3.2" height="1.1" fill="rgba(0,0,0,.22)"/><rect x="69.74" y="17.70" width="4.5" height="1.1" fill="rgba(0,0,0,.22)"/><rect x="81.23" y="17.70" width="4.5" height="1.1" fill="rgba(0,0,0,.22)"/><rect x="92.72" y="17.70" width="4.5" height="1.1" fill="rgba(0,0,0,.22)"/><rect x="104.21" y="17.70" width="4.5" height="1.1" fill="rgba(0,0,0,.22)"/><rect x="0.80" y="20.80" width="4.5" height="1.1" fill="rgba(0,0,0,.22)"/><rect x="12.29" y="20.80" width="3.2" height="1.1" fill="rgba(0,0,0,.22)"/><rect x="23.78" y="20.80" width="3.2" height="1.1" fill="rgba(0,0,0,.22)"/><rect x="69.74" y="20.80" width="4.5" height="1.1" fill="rgba(0,0,0,.22)"/><rect x="81.23" y="20.80" width="4.5" height="1.1" fill="rgba(0,0,0,.22)"/><rect x="92.72" y="20.80" width="4.5" height="1.1" fill="rgba(0,0,0,.22)"/><rect x="104.21" y="20.80" width="4.5" height="1.1" fill="rgba(0,0,0,.22)"/><rect x="0.80" y="23.90" width="4.5" height="1.1" fill="rgba(0,0,0,.22)"/><rect x="12.29" y="23.90" width="3.2" height="1.1" fill="rgba(0,0,0,.22)"/><rect x="23.78" y="23.90" width="3.2" height="1.1" fill="rgba(0,0,0,.22)"/><rect x="69.74" y="23.90" width="4.5" height="1.1" fill="rgba(0,0,0,.22)"/><rect x="81.23" y="23.90" width="4.5" height="1.1" fill="rgba(0,0,0,.22)"/><rect x="92.72" y="23.90" width="4.5" height="1.1" fill="rgba(0,0,0,.22)"/><rect x="104.21" y="23.90" width="4.5" height="1.1" fill="rgba(0,0,0,.22)"/><rect x="0.80" y="27.00" width="4.5" height="1.1" fill="rgba(0,0,0,.22)"/><rect x="12.29" y="27.00" width="3.2" height="1.1" fill="rgba(0,0,0,.22)"/><rect x="35.27" y="27.00" width="4.5" height="1.1" fill="rgba(0,0,0,.22)"/><rect x="58.25" y="27.00" width="4.5" height="1.1" fill="rgba(0,0,0,.22)"/><rect x="69.74" y="27.00" width="4.5" height="1.1" fill="rgba(0,0,0,.22)"/><rect x="92.72" y="27.00" width="4.5" height="1.1" fill="rgba(0,0,0,.22)"/><rect x="0.80" y="30.10" width="4.5" height="1.1" fill="rgba(0,0,0,.22)"/><rect x="12.29" y="30.10" width="3.2" height="1.1" fill="rgba(0,0,0,.22)"/><rect x="35.27" y="30.10" width="4.5" height="1.1" fill="rgba(0,0,0,.22)"/><rect x="58.25" y="30.10" width="4.5" height="1.1" fill="rgba(0,0,0,.22)"/><rect x="69.74" y="30.10" width="4.5" height="1.1" fill="rgba(0,0,0,.22)"/><rect x="92.72" y="30.10" width="4.5" height="1.1" fill="rgba(0,0,0,.22)"/><rect x="0.80" y="33.20" width="4.5" height="1.1" fill="rgba(0,0,0,.22)"/><rect x="12.29" y="33.20" width="3.2" height="1.1" fill="rgba(0,0,0,.22)"/><rect x="35.27" y="33.20" width="4.5" height="1.1" fill="rgba(0,0,0,.22)"/><rect x="58.25" y="33.20" width="4.5" height="1.1" fill="rgba(0,0,0,.22)"/><rect x="69.74" y="33.20" width="4.5" height="1.1" fill="rgba(0,0,0,.22)"/><rect x="92.72" y="33.20" width="4.5" height="1.1" fill="rgba(0,0,0,.22)"/><rect x="0.80" y="36.30" width="4.5" height="1.1" fill="rgba(0,0,0,.22)"/><rect x="12.29" y="36.30" width="3.2" height="1.1" fill="rgba(0,0,0,.22)"/><rect x="35.27" y="36.30" width="4.5" height="1.1" fill="rgba(0,0,0,.22)"/><rect x="58.25" y="36.30" width="4.5" height="1.1" fill="rgba(0,0,0,.22)"/><rect x="69.74" y="36.30" width="4.5" height="1.1" fill="rgba(0,0,0,.22)"/><rect x="92.72" y="36.30" width="4.5" height="1.1" fill="rgba(0,0,0,.22)"/><rect x="0.80" y="39.40" width="4.5" height="1.1" fill="rgba(0,0,0,.22)"/><rect x="12.29" y="39.40" width="3.2" height="1.1" fill="rgba(0,0,0,.22)"/><rect x="35.27" y="39.40" width="4.5" height="1.1" fill="rgba(0,0,0,.22)"/><rect x="58.25" y="39.40" width="4.5" height="1.1" fill="rgba(0,0,0,.22)"/><rect x="69.74" y="39.40" width="4.5" height="1.1" fill="rgba(0,0,0,.22)"/><rect x="92.72" y="39.40" width="4.5" height="1.1" fill="rgba(0,0,0,.22)"/><rect x="0.80" y="42.50" width="4.5" height="1.1" fill="rgba(0,0,0,.22)"/><rect x="12.29" y="42.50" width="3.2" height="1.1" fill="rgba(0,0,0,.22)"/><rect x="35.27" y="42.50" width="4.5" height="1.1" fill="rgba(0,0,0,.22)"/><rect x="58.25" y="42.50" width="4.5" height="1.1" fill="rgba(0,0,0,.22)"/><rect x="69.74" y="42.50" width="4.5" height="1.1" fill="rgba(0,0,0,.22)"/><rect x="92.72" y="42.50" width="4.5" height="1.1" fill="rgba(0,0,0,.22)"/></svg>
<div class="a" style="left:62.40px;top:609.40px;width:114.90px;height:10.50px;background:#b3b3b3;"></div>
<div class="a" style="left:62.40px;top:619.90px;width:11.49px;height:3.10px;background:#fff;"></div>
<div class="a" style="left:73.89px;top:619.90px;width:11.49px;height:3.10px;background:#fff;"></div>
<div class="a" style="left:85.38px;top:619.90px;width:11.49px;height:3.10px;background:#fff;"></div>
<div class="a" style="left:96.87px;top:619.90px;width:11.49px;height:3.10px;background:#fff;"></div>
<div class="a" style="left:108.36px;top:619.90px;width:11.49px;height:3.10px;background:#fff;"></div>
<div class="a" style="left:119.85px;top:619.90px;width:11.49px;height:3.10px;background:#fff;"></div>
<div class="a" style="left:131.34px;top:619.90px;width:11.49px;height:3.10px;background:#fff;"></div>
<div class="a" style="left:142.83px;top:619.90px;width:11.49px;height:3.10px;background:#fff;"></div>
<div class="a" style="left:154.32px;top:619.90px;width:11.49px;height:3.10px;background:#fff;"></div>
<div class="a" style="left:165.81px;top:619.90px;width:11.49px;height:3.10px;background:#fff;"></div>
<div class="a" style="left:62.40px;top:623.00px;width:11.49px;height:3.10px;background:#fcd878;"></div>
<div class="a" style="left:73.89px;top:623.00px;width:11.49px;height:3.10px;background:#fff;"></div>
<div class="a" style="left:85.38px;top:623.00px;width:11.49px;height:3.10px;background:#fff;"></div>
<div class="a" style="left:96.87px;top:623.00px;width:11.49px;height:3.10px;background:#fff;"></div>
<div class="a" style="left:108.36px;top:623.00px;width:11.49px;height:3.10px;background:#fff;"></div>
<div class="a" style="left:119.85px;top:623.00px;width:11.49px;height:3.10px;background:#fff;"></div>
<div class="a" style="left:131.34px;top:623.00px;width:11.49px;height:3.10px;background:#fff;"></div>
<div class="a" style="left:142.83px;top:623.00px;width:11.49px;height:3.10px;background:#dedede;"></div>
<div class="a" style="left:154.32px;top:623.00px;width:11.49px;height:3.10px;background:#fff;"></div>
<div class="a" style="left:165.81px;top:623.00px;width:11.49px;height:3.10px;background:#dedede;"></div>
<div class="a" style="left:62.40px;top:626.10px;width:11.49px;height:3.10px;background:#fcd878;"></div>
<div class="a" style="left:73.89px;top:626.10px;width:11.49px;height:3.10px;background:#fff;"></div>
<div class="a" style="left:85.38px;top:626.10px;width:11.49px;height:3.10px;background:#fff;"></div>
<div class="a" style="left:96.87px;top:626.10px;width:11.49px;height:3.10px;background:#fff;"></div>
<div class="a" style="left:108.36px;top:626.10px;width:11.49px;height:3.10px;background:#fff;"></div>
<div class="a" style="left:119.85px;top:626.10px;width:11.49px;height:3.10px;background:#fff;"></div>
<div class="a" style="left:131.34px;top:626.10px;width:11.49px;height:3.10px;background:#fff;"></div>
<div class="a" style="left:142.83px;top:626.10px;width:11.49px;height:3.10px;background:#dedede;"></div>
<div class="a" style="left:154.32px;top:626.10px;width:11.49px;height:3.10px;background:#fff;"></div>
<div class="a" style="left:165.81px;top:626.10px;width:11.49px;height:3.10px;background:#dedede;"></div>
<div class="a" style="left:62.40px;top:629.20px;width:11.49px;height:3.10px;background:#fcd878;"></div>
<div class="a" style="left:73.89px;top:629.20px;width:11.49px;height:3.10px;background:#fff;"></div>
<div class="a" style="left:85.38px;top:629.20px;width:11.49px;height:3.10px;background:#fff;"></div>
<div class="a" style="left:96.87px;top:629.20px;width:11.49px;height:3.10px;background:#fff;"></div>
<div class="a" style="left:108.36px;top:629.20px;width:11.49px;height:3.10px;background:#fff;"></div>
<div class="a" style="left:119.85px;top:629.20px;width:11.49px;height:3.10px;background:#fff;"></div>
<div class="a" style="left:131.34px;top:629.20px;width:11.49px;height:3.10px;background:#fff;"></div>
<div class="a" style="left:142.83px;top:629.20px;width:11.49px;height:3.10px;background:#dedede;"></div>
<div class="a" style="left:154.32px;top:629.20px;width:11.49px;height:3.10px;background:#fff;"></div>
<div class="a" style="left:165.81px;top:629.20px;width:11.49px;height:3.10px;background:#dedede;"></div>
<div class="a" style="left:62.40px;top:632.30px;width:11.49px;height:3.10px;background:#fcd878;"></div>
<div class="a" style="left:73.89px;top:632.30px;width:11.49px;height:3.10px;background:#fff;"></div>
<div class="a" style="left:85.38px;top:632.30px;width:11.49px;height:3.10px;background:#fff;"></div>
<div class="a" style="left:96.87px;top:632.30px;width:11.49px;height:3.10px;background:#fff;"></div>
<div class="a" style="left:108.36px;top:632.30px;width:11.49px;height:3.10px;background:#fff;"></div>
<div class="a" style="left:119.85px;top:632.30px;width:11.49px;height:3.10px;background:#fff;"></div>
<div class="a" style="left:131.34px;top:632.30px;width:11.49px;height:3.10px;background:#fff;"></div>
<div class="a" style="left:142.83px;top:632.30px;width:11.49px;height:3.10px;background:#dedede;"></div>
<div class="a" style="left:154.32px;top:632.30px;width:11.49px;height:3.10px;background:#fff;"></div>
<div class="a" style="left:165.81px;top:632.30px;width:11.49px;height:3.10px;background:#dedede;"></div>
<div class="a" style="left:62.40px;top:635.40px;width:11.49px;height:3.10px;background:#fcd878;"></div>
<div class="a" style="left:73.89px;top:635.40px;width:11.49px;height:3.10px;background:#fff;"></div>
<div class="a" style="left:85.38px;top:635.40px;width:11.49px;height:3.10px;background:#fff;"></div>
<div class="a" style="left:96.87px;top:635.40px;width:11.49px;height:3.10px;background:#fff;"></div>
<div class="a" style="left:108.36px;top:635.40px;width:11.49px;height:3.10px;background:#fff;"></div>
<div class="a" style="left:119.85px;top:635.40px;width:11.49px;height:3.10px;background:#fff;"></div>
<div class="a" style="left:131.34px;top:635.40px;width:11.49px;height:3.10px;background:#fff;"></div>
<div class="a" style="left:142.83px;top:635.40px;width:11.49px;height:3.10px;background:#dedede;"></div>
<div class="a" style="left:154.32px;top:635.40px;width:11.49px;height:3.10px;background:#fcd878;"></div>
<div class="a" style="left:165.81px;top:635.40px;width:11.49px;height:3.10px;background:#dedede;"></div>
<div class="a" style="left:62.40px;top:638.50px;width:11.49px;height:3.10px;background:#fcd878;"></div>
<div class="a" style="left:73.89px;top:638.50px;width:11.49px;height:3.10px;background:#fff;"></div>
<div class="a" style="left:85.38px;top:638.50px;width:11.49px;height:3.10px;background:#fff;"></div>
<div class="a" style="left:96.87px;top:638.50px;width:11.49px;height:3.10px;background:#fff;"></div>
<div class="a" style="left:108.36px;top:638.50px;width:11.49px;height:3.10px;background:#fff;"></div>
<div class="a" style="left:119.85px;top:638.50px;width:11.49px;height:3.10px;background:#fff;"></div>
<div class="a" style="left:131.34px;top:638.50px;width:11.49px;height:3.10px;background:#fff;"></div>
<div class="a" style="left:142.83px;top:638.50px;width:11.49px;height:3.10px;background:#dedede;"></div>
<div class="a" style="left:154.32px;top:638.50px;width:11.49px;height:3.10px;background:#fcd878;"></div>
<div class="a" style="left:165.81px;top:638.50px;width:11.49px;height:3.10px;background:#dedede;"></div>
<div class="a" style="left:62.40px;top:641.60px;width:11.49px;height:3.10px;background:#fcd878;"></div>
<div class="a" style="left:73.89px;top:641.60px;width:11.49px;height:3.10px;background:#fff;"></div>
<div class="a" style="left:85.38px;top:641.60px;width:11.49px;height:3.10px;background:#fff;"></div>
<div class="a" style="left:96.87px;top:641.60px;width:11.49px;height:3.10px;background:#fff;"></div>
<div class="a" style="left:108.36px;top:641.60px;width:11.49px;height:3.10px;background:#fff;"></div>
<div class="a" style="left:119.85px;top:641.60px;width:11.49px;height:3.10px;background:#fff;"></div>
<div class="a" style="left:131.34px;top:641.60px;width:11.49px;height:3.10px;background:#fff;"></div>
<div class="a" style="left:142.83px;top:641.60px;width:11.49px;height:3.10px;background:#dedede;"></div>
<div class="a" style="left:154.32px;top:641.60px;width:11.49px;height:3.10px;background:#fcd878;"></div>
<div class="a" style="left:165.81px;top:641.60px;width:11.49px;height:3.10px;background:#dedede;"></div>
<div class="a" style="left:62.40px;top:644.70px;width:11.49px;height:3.10px;background:#e3e3e3;"></div>
<div class="a" style="left:73.89px;top:644.70px;width:11.49px;height:3.10px;background:#fff;"></div>
<div class="a" style="left:85.38px;top:644.70px;width:11.49px;height:3.10px;background:#fff;"></div>
<div class="a" style="left:96.87px;top:644.70px;width:11.49px;height:3.10px;background:#fff;"></div>
<div class="a" style="left:108.36px;top:644.70px;width:11.49px;height:3.10px;background:#fff;"></div>
<div class="a" style="left:119.85px;top:644.70px;width:11.49px;height:3.10px;background:#fff;"></div>
<div class="a" style="left:131.34px;top:644.70px;width:11.49px;height:3.10px;background:#fff;"></div>
<div class="a" style="left:142.83px;top:644.70px;width:11.49px;height:3.10px;background:#dedede;"></div>
<div class="a" style="left:154.32px;top:644.70px;width:11.49px;height:3.10px;background:#fcd878;"></div>
<div class="a" style="left:165.81px;top:644.70px;width:11.49px;height:3.10px;background:#dedede;"></div>
<div class="a" style="left:62.40px;top:647.80px;width:11.49px;height:3.10px;background:#e3e3e3;"></div>
<div class="a" style="left:73.89px;top:647.80px;width:11.49px;height:3.10px;background:#fff;"></div>
<div class="a" style="left:85.38px;top:647.80px;width:11.49px;height:3.10px;background:#fff;"></div>
<div class="a" style="left:96.87px;top:647.80px;width:11.49px;height:3.10px;background:#fff;"></div>
<div class="a" style="left:108.36px;top:647.80px;width:11.49px;height:3.10px;background:#fff;"></div>
<div class="a" style="left:119.85px;top:647.80px;width:11.49px;height:3.10px;background:#fff;"></div>
<div class="a" style="left:131.34px;top:647.80px;width:11.49px;height:3.10px;background:#fff;"></div>
<div class="a" style="left:142.83px;top:647.80px;width:11.49px;height:3.10px;background:#dedede;"></div>
<div class="a" style="left:154.32px;top:647.80px;width:11.49px;height:3.10px;background:#fff;"></div>
<div class="a" style="left:165.81px;top:647.80px;width:11.49px;height:3.10px;background:#dedede;"></div>
<div class="a" style="left:62.40px;top:650.90px;width:11.49px;height:3.10px;background:#e3e3e3;"></div>
<div class="a" style="left:73.89px;top:650.90px;width:11.49px;height:3.10px;background:#fff;"></div>
<div class="a" style="left:85.38px;top:650.90px;width:11.49px;height:3.10px;background:#fff;"></div>
<div class="a" style="left:96.87px;top:650.90px;width:11.49px;height:3.10px;background:#fff;"></div>
<div class="a" style="left:108.36px;top:650.90px;width:11.49px;height:3.10px;background:#fff;"></div>
<div class="a" style="left:119.85px;top:650.90px;width:11.49px;height:3.10px;background:#fff;"></div>
<div class="a" style="left:131.34px;top:650.90px;width:11.49px;height:3.10px;background:#fff;"></div>
<div class="a" style="left:142.83px;top:650.90px;width:11.49px;height:3.10px;background:#dedede;"></div>
<div class="a" style="left:154.32px;top:650.90px;width:11.49px;height:3.10px;background:#fff;"></div>
<div class="a" style="left:165.81px;top:650.90px;width:11.49px;height:3.10px;background:#dedede;"></div>
<svg class="a" style="left:62.4px;top:609.4px" width="114.9" height="45" viewBox="0 0 114.9 45"><line x1="11.49" y1="3.9" x2="11.49" y2="44.6" stroke="#8a8a8a" stroke-width=".5"/><line x1="22.98" y1="3.9" x2="22.98" y2="44.6" stroke="#8a8a8a" stroke-width=".5"/><line x1="34.47" y1="3.9" x2="34.47" y2="44.6" stroke="#8a8a8a" stroke-width=".5"/><line x1="45.96" y1="3.9" x2="45.96" y2="44.6" stroke="#8a8a8a" stroke-width=".5"/><line x1="57.45" y1="3.9" x2="57.45" y2="44.6" stroke="#8a8a8a" stroke-width=".5"/><line x1="68.94" y1="3.9" x2="68.94" y2="44.6" stroke="#8a8a8a" stroke-width=".5"/><line x1="80.43" y1="3.9" x2="80.43" y2="44.6" stroke="#8a8a8a" stroke-width=".5"/><line x1="91.92" y1="3.9" x2="91.92" y2="44.6" stroke="#8a8a8a" stroke-width=".5"/><line x1="103.41" y1="3.9" x2="103.41" y2="44.6" stroke="#8a8a8a" stroke-width=".5"/><line x1="0" y1="10.50" x2="114.9" y2="10.50" stroke="#a0a0a0" stroke-width=".45"/><line x1="0" y1="13.60" x2="114.9" y2="13.60" stroke="#a0a0a0" stroke-width=".45"/><line x1="0" y1="16.70" x2="114.9" y2="16.70" stroke="#a0a0a0" stroke-width=".45"/><line x1="0" y1="19.80" x2="114.9" y2="19.80" stroke="#a0a0a0" stroke-width=".45"/><line x1="0" y1="22.90" x2="114.9" y2="22.90" stroke="#a0a0a0" stroke-width=".45"/><line x1="0" y1="26.00" x2="114.9" y2="26.00" stroke="#a0a0a0" stroke-width=".45"/><line x1="0" y1="29.10" x2="114.9" y2="29.10" stroke="#a0a0a0" stroke-width=".45"/><line x1="0" y1="32.20" x2="114.9" y2="32.20" stroke="#a0a0a0" stroke-width=".45"/><line x1="0" y1="35.30" x2="114.9" y2="35.30" stroke="#a0a0a0" stroke-width=".45"/><line x1="0" y1="38.40" x2="114.9" y2="38.40" stroke="#a0a0a0" stroke-width=".45"/><line x1="0" y1="41.50" x2="114.9" y2="41.50" stroke="#a0a0a0" stroke-width=".45"/><line x1="0" y1="44.60" x2="114.9" y2="44.60" stroke="#a0a0a0" stroke-width=".45"/><line x1="0" y1="3.9" x2="114.9" y2="3.9" stroke="#999" stroke-width=".35"/><rect x="48.45" y="1.4" width="18" height="1.3" fill="rgba(0,0,0,.35)"/><rect x="2.25" y="6.5" width="7" height="1.4" fill="rgba(0,0,0,.2)"/><rect x="13.73" y="6.5" width="7" height="1.4" fill="rgba(0,0,0,.2)"/><rect x="25.23" y="6.5" width="7" height="1.4" fill="rgba(0,0,0,.2)"/><rect x="36.71" y="6.5" width="7" height="1.4" fill="rgba(0,0,0,.2)"/><rect x="48.20" y="6.5" width="7" height="1.4" fill="rgba(0,0,0,.2)"/><rect x="59.70" y="6.5" width="7" height="1.4" fill="rgba(0,0,0,.2)"/><rect x="71.19" y="6.5" width="7" height="1.4" fill="rgba(0,0,0,.2)"/><rect x="82.68" y="6.5" width="7" height="1.4" fill="rgba(0,0,0,.2)"/><rect x="94.17" y="6.5" width="7" height="1.4" fill="rgba(0,0,0,.2)"/><rect x="105.66" y="6.5" width="7" height="1.4" fill="rgba(0,0,0,.2)"/><rect x="35.27" y="11.50" width="4.5" height="1.1" fill="rgba(0,0,0,.22)"/><rect x="92.72" y="11.50" width="4.5" height="1.1" fill="rgba(0,0,0,.22)"/><rect x="0.80" y="14.60" width="4.5" height="1.1" fill="rgba(0,0,0,.22)"/><rect x="12.29" y="14.60" width="3.2" height="1.1" fill="rgba(0,0,0,.22)"/><rect x="23.78" y="14.60" width="3.2" height="1.1" fill="rgba(0,0,0,.22)"/><rect x="69.74" y="14.60" width="4.5" height="1.1" fill="rgba(0,0,0,.22)"/><rect x="81.23" y="14.60" width="4.5" height="1.1" fill="rgba(0,0,0,.22)"/><rect x="92.72" y="14.60" width="4.5" height="1.1" fill="rgba(0,0,0,.22)"/><rect x="104.21" y="14.60" width="4.5" height="1.1" fill="rgba(0,0,0,.22)"/><rect x="0.80" y="17.70" width="4.5" height="1.1" fill="rgba(0,0,0,.22)"/><rect x="12.29" y="17.70" width="3.2" height="1.1" fill="rgba(0,0,0,.22)"/><rect x="23.78" y="17.70" width="3.2" height="1.1" fill="rgba(0,0,0,.22)"/><rect x="69.74" y="17.70" width="4.5" height="1.1" fill="rgba(0,0,0,.22)"/><rect x="81.23" y="17.70" width="4.5" height="1.1" fill="rgba(0,0,0,.22)"/><rect x="92.72" y="17.70" width="4.5" height="1.1" fill="rgba(0,0,0,.22)"/><rect x="104.21" y="17.70" width="4.5" height="1.1" fill="rgba(0,0,0,.22)"/><rect x="0.80" y="20.80" width="4.5" height="1.1" fill="rgba(0,0,0,.22)"/><rect x="12.29" y="20.80" width="3.2" height="1.1" fill="rgba(0,0,0,.22)"/><rect x="23.78" y="20.80" width="3.2" height="1.1" fill="rgba(0,0,0,.22)"/><rect x="69.74" y="20.80" width="4.5" height="1.1" fill="rgba(0,0,0,.22)"/><rect x="81.23" y="20.80" width="4.5" height="1.1" fill="rgba(0,0,0,.22)"/><rect x="92.72" y="20.80" width="4.5" height="1.1" fill="rgba(0,0,0,.22)"/><rect x="104.21" y="20.80" width="4.5" height="1.1" fill="rgba(0,0,0,.22)"/><rect x="0.80" y="23.90" width="4.5" height="1.1" fill="rgba(0,0,0,.22)"/><rect x="12.29" y="23.90" width="3.2" height="1.1" fill="rgba(0,0,0,.22)"/><rect x="23.78" y="23.90" width="3.2" height="1.1" fill="rgba(0,0,0,.22)"/><rect x="69.74" y="23.90" width="4.5" height="1.1" fill="rgba(0,0,0,.22)"/><rect x="81.23" y="23.90" width="4.5" height="1.1" fill="rgba(0,0,0,.22)"/><rect x="92.72" y="23.90" width="4.5" height="1.1" fill="rgba(0,0,0,.22)"/><rect x="104.21" y="23.90" width="4.5" height="1.1" fill="rgba(0,0,0,.22)"/><rect x="0.80" y="27.00" width="4.5" height="1.1" fill="rgba(0,0,0,.22)"/><rect x="12.29" y="27.00" width="3.2" height="1.1" fill="rgba(0,0,0,.22)"/><rect x="35.27" y="27.00" width="4.5" height="1.1" fill="rgba(0,0,0,.22)"/><rect x="58.25" y="27.00" width="4.5" height="1.1" fill="rgba(0,0,0,.22)"/><rect x="69.74" y="27.00" width="4.5" height="1.1" fill="rgba(0,0,0,.22)"/><rect x="92.72" y="27.00" width="4.5" height="1.1" fill="rgba(0,0,0,.22)"/><rect x="0.80" y="30.10" width="4.5" height="1.1" fill="rgba(0,0,0,.22)"/><rect x="12.29" y="30.10" width="3.2" height="1.1" fill="rgba(0,0,0,.22)"/><rect x="35.27" y="30.10" width="4.5" height="1.1" fill="rgba(0,0,0,.22)"/><rect x="58.25" y="30.10" width="4.5" height="1.1" fill="rgba(0,0,0,.22)"/><rect x="69.74" y="30.10" width="4.5" height="1.1" fill="rgba(0,0,0,.22)"/><rect x="92.72" y="30.10" width="4.5" height="1.1" fill="rgba(0,0,0,.22)"/><rect x="0.80" y="33.20" width="4.5" height="1.1" fill="rgba(0,0,0,.22)"/><rect x="12.29" y="33.20" width="3.2" height="1.1" fill="rgba(0,0,0,.22)"/><rect x="35.27" y="33.20" width="4.5" height="1.1" fill="rgba(0,0,0,.22)"/><rect x="58.25" y="33.20" width="4.5" height="1.1" fill="rgba(0,0,0,.22)"/><rect x="69.74" y="33.20" width="4.5" height="1.1" fill="rgba(0,0,0,.22)"/><rect x="92.72" y="33.20" width="4.5" height="1.1" fill="rgba(0,0,0,.22)"/><rect x="0.80" y="36.30" width="4.5" height="1.1" fill="rgba(0,0,0,.22)"/><rect x="12.29" y="36.30" width="3.2" height="1.1" fill="rgba(0,0,0,.22)"/><rect x="35.27" y="36.30" width="4.5" height="1.1" fill="rgba(0,0,0,.22)"/><rect x="58.25" y="36.30" width="4.5" height="1.1" fill="rgba(0,0,0,.22)"/><rect x="69.74" y="36.30" width="4.5" height="1.1" fill="rgba(0,0,0,.22)"/><rect x="92.72" y="36.30" width="4.5" height="1.1" fill="rgba(0,0,0,.22)"/><rect x="0.80" y="39.40" width="4.5" height="1.1" fill="rgba(0,0,0,.22)"/><rect x="12.29" y="39.40" width="3.2" height="1.1" fill="rgba(0,0,0,.22)"/><rect x="35.27" y="39.40" width="4.5" height="1.1" fill="rgba(0,0,0,.22)"/><rect x="58.25" y="39.40" width="4.5" height="1.1" fill="rgba(0,0,0,.22)"/><rect x="69.74" y="39.40" width="4.5" height="1.1" fill="rgba(0,0,0,.22)"/><rect x="92.72" y="39.40" width="4.5" height="1.1" fill="rgba(0,0,0,.22)"/><rect x="0.80" y="42.50" width="4.5" height="1.1" fill="rgba(0,0,0,.22)"/><rect x="12.29" y="42.50" width="3.2" height="1.1" fill="rgba(0,0,0,.22)"/><rect x="35.27" y="42.50" width="4.5" height="1.1" fill="rgba(0,0,0,.22)"/><rect x="58.25" y="42.50" width="4.5" height="1.1" fill="rgba(0,0,0,.22)"/><rect x="69.74" y="42.50" width="4.5" height="1.1" fill="rgba(0,0,0,.22)"/><rect x="92.72" y="42.50" width="4.5" height="1.1" fill="rgba(0,0,0,.22)"/></svg>
<div class="a" style="left:62.40px;top:659.20px;width:114.90px;height:10.50px;background:#b3b3b3;"></div>
<div class="a" style="left:62.40px;top:669.70px;width:11.49px;height:3.10px;background:#fff;"></div>
<div class="a" style="left:73.89px;top:669.70px;width:11.49px;height:3.10px;background:#fff;"></div>
<div class="a" style="left:85.38px;top:669.70px;width:11.49px;height:3.10px;background:#fff;"></div>
<div class="a" style="left:96.87px;top:669.70px;width:11.49px;height:3.10px;background:#fff;"></div>
<div class="a" style="left:108.36px;top:669.70px;width:11.49px;height:3.10px;background:#fff;"></div>
<div class="a" style="left:119.85px;top:669.70px;width:11.49px;height:3.10px;background:#fff;"></div>
<div class="a" style="left:131.34px;top:669.70px;width:11.49px;height:3.10px;background:#fff;"></div>
<div class="a" style="left:142.83px;top:669.70px;width:11.49px;height:3.10px;background:#fff;"></div>
<div class="a" style="left:154.32px;top:669.70px;width:11.49px;height:3.10px;background:#fff;"></div>
<div class="a" style="left:165.81px;top:669.70px;width:11.49px;height:3.10px;background:#fff;"></div>
<div class="a" style="left:62.40px;top:672.80px;width:11.49px;height:3.10px;background:#fcd878;"></div>
<div class="a" style="left:73.89px;top:672.80px;width:11.49px;height:3.10px;background:#fff;"></div>
<div class="a" style="left:85.38px;top:672.80px;width:11.49px;height:3.10px;background:#fff;"></div>
<div class="a" style="left:96.87px;top:672.80px;width:11.49px;height:3.10px;background:#fff;"></div>
<div class="a" style="left:108.36px;top:672.80px;width:11.49px;height:3.10px;background:#fff;"></div>
<div class="a" style="left:119.85px;top:672.80px;width:11.49px;height:3.10px;background:#fff;"></div>
<div class="a" style="left:131.34px;top:672.80px;width:11.49px;height:3.10px;background:#fff;"></div>
<div class="a" style="left:142.83px;top:672.80px;width:11.49px;height:3.10px;background:#dedede;"></div>
<div class="a" style="left:154.32px;top:672.80px;width:11.49px;height:3.10px;background:#fff;"></div>
<div class="a" style="left:165.81px;top:672.80px;width:11.49px;height:3.10px;background:#dedede;"></div>
<div class="a" style="left:62.40px;top:675.90px;width:11.49px;height:3.10px;background:#fcd878;"></div>
<div class="a" style="left:73.89px;top:675.90px;width:11.49px;height:3.10px;background:#fff;"></div>
<div class="a" style="left:85.38px;top:675.90px;width:11.49px;height:3.10px;background:#fff;"></div>
<div class="a" style="left:96.87px;top:675.90px;width:11.49px;height:3.10px;background:#fff;"></div>
<div class="a" style="left:108.36px;top:675.90px;width:11.49px;height:3.10px;background:#fff;"></div>
<div class="a" style="left:119.85px;top:675.90px;width:11.49px;height:3.10px;background:#fff;"></div>
<div class="a" style="left:131.34px;top:675.90px;width:11.49px;height:3.10px;background:#fff;"></div>
<div class="a" style="left:142.83px;top:675.90px;width:11.49px;height:3.10px;background:#dedede;"></div>
<div class="a" style="left:154.32px;top:675.90px;width:11.49px;height:3.10px;background:#fff;"></div>
<div class="a" style="left:165.81px;top:675.90px;width:11.49px;height:3.10px;background:#dedede;"></div>
<div class="a" style="left:62.40px;top:679.00px;width:11.49px;height:3.10px;background:#fcd878;"></div>
<div class="a" style="left:73.89px;top:679.00px;width:11.49px;height:3.10px;background:#fff;"></div>
<div class="a" style="left:85.38px;top:679.00px;width:11.49px;height:3.10px;background:#fff;"></div>
<div class="a" style="left:96.87px;top:679.00px;width:11.49px;height:3.10px;background:#fff;"></div>
<div class="a" style="left:108.36px;top:679.00px;width:11.49px;height:3.10px;background:#fff;"></div>
<div class="a" style="left:119.85px;top:679.00px;width:11.49px;height:3.10px;background:#fff;"></div>
<div class="a" style="left:131.34px;top:679.00px;width:11.49px;height:3.10px;background:#fff;"></div>
<div class="a" style="left:142.83px;top:679.00px;width:11.49px;height:3.10px;background:#dedede;"></div>
<div class="a" style="left:154.32px;top:679.00px;width:11.49px;height:3.10px;background:#fff;"></div>
<div class="a" style="left:165.81px;top:679.00px;width:11.49px;height:3.10px;background:#dedede;"></div>
<div class="a" style="left:62.40px;top:682.10px;width:11.49px;height:3.10px;background:#fcd878;"></div>
<div class="a" style="left:73.89px;top:682.10px;width:11.49px;height:3.10px;background:#fff;"></div>
<div class="a" style="left:85.38px;top:682.10px;width:11.49px;height:3.10px;background:#fff;"></div>
<div class="a" style="left:96.87px;top:682.10px;width:11.49px;height:3.10px;background:#fff;"></div>
<div class="a" style="left:108.36px;top:682.10px;width:11.49px;height:3.10px;background:#fff;"></div>
<div class="a" style="left:119.85px;top:682.10px;width:11.49px;height:3.10px;background:#fff;"></div>
<div class="a" style="left:131.34px;top:682.10px;width:11.49px;height:3.10px;background:#fff;"></div>
<div class="a" style="left:142.83px;top:682.10px;width:11.49px;height:3.10px;background:#dedede;"></div>
<div class="a" style="left:154.32px;top:682.10px;width:11.49px;height:3.10px;background:#fff;"></div>
<div class="a" style="left:165.81px;top:682.10px;width:11.49px;height:3.10px;background:#dedede;"></div>
<div class="a" style="left:62.40px;top:685.20px;width:11.49px;height:3.10px;background:#fcd878;"></div>
<div class="a" style="left:73.89px;top:685.20px;width:11.49px;height:3.10px;background:#fff;"></div>
<div class="a" style="left:85.38px;top:685.20px;width:11.49px;height:3.10px;background:#fff;"></div>
<div class="a" style="left:96.87px;top:685.20px;width:11.49px;height:3.10px;background:#fff;"></div>
<div class="a" style="left:108.36px;top:685.20px;width:11.49px;height:3.10px;background:#fff;"></div>
<div class="a" style="left:119.85px;top:685.20px;width:11.49px;height:3.10px;background:#fff;"></div>
<div class="a" style="left:131.34px;top:685.20px;width:11.49px;height:3.10px;background:#fff;"></div>
<div class="a" style="left:142.83px;top:685.20px;width:11.49px;height:3.10px;background:#dedede;"></div>
<div class="a" style="left:154.32px;top:685.20px;width:11.49px;height:3.10px;background:#fcd878;"></div>
<div class="a" style="left:165.81px;top:685.20px;width:11.49px;height:3.10px;background:#dedede;"></div>
<div class="a" style="left:62.40px;top:688.30px;width:11.49px;height:3.10px;background:#fcd878;"></div>
<div class="a" style="left:73.89px;top:688.30px;width:11.49px;height:3.10px;background:#fff;"></div>
<div class="a" style="left:85.38px;top:688.30px;width:11.49px;height:3.10px;background:#fff;"></div>
<div class="a" style="left:96.87px;top:688.30px;width:11.49px;height:3.10px;background:#fff;"></div>
<div class="a" style="left:108.36px;top:688.30px;width:11.49px;height:3.10px;background:#fff;"></div>
<div class="a" style="left:119.85px;top:688.30px;width:11.49px;height:3.10px;background:#fff;"></div>
<div class="a" style="left:131.34px;top:688.30px;width:11.49px;height:3.10px;background:#fff;"></div>
<div class="a" style="left:142.83px;top:688.30px;width:11.49px;height:3.10px;background:#dedede;"></div>
<div class="a" style="left:154.32px;top:688.30px;width:11.49px;height:3.10px;background:#fcd878;"></div>
<div class="a" style="left:165.81px;top:688.30px;width:11.49px;height:3.10px;background:#dedede;"></div>
<div class="a" style="left:62.40px;top:691.40px;width:11.49px;height:3.10px;background:#fcd878;"></div>
<div class="a" style="left:73.89px;top:691.40px;width:11.49px;height:3.10px;background:#fff;"></div>
<div class="a" style="left:85.38px;top:691.40px;width:11.49px;height:3.10px;background:#fff;"></div>
<div class="a" style="left:96.87px;top:691.40px;width:11.49px;height:3.10px;background:#fff;"></div>
<div class="a" style="left:108.36px;top:691.40px;width:11.49px;height:3.10px;background:#fff;"></div>
<div class="a" style="left:119.85px;top:691.40px;width:11.49px;height:3.10px;background:#fff;"></div>
<div class="a" style="left:131.34px;top:691.40px;width:11.49px;height:3.10px;background:#fff;"></div>
<div class="a" style="left:142.83px;top:691.40px;width:11.49px;height:3.10px;background:#dedede;"></div>
<div class="a" style="left:154.32px;top:691.40px;width:11.49px;height:3.10px;background:#fcd878;"></div>
<div class="a" style="left:165.81px;top:691.40px;width:11.49px;height:3.10px;background:#dedede;"></div>
<div class="a" style="left:62.40px;top:694.50px;width:11.49px;height:3.10px;background:#e3e3e3;"></div>
<div class="a" style="left:73.89px;top:694.50px;width:11.49px;height:3.10px;background:#fff;"></div>
<div class="a" style="left:85.38px;top:694.50px;width:11.49px;height:3.10px;background:#fff;"></div>
<div class="a" style="left:96.87px;top:694.50px;width:11.49px;height:3.10px;background:#fff;"></div>
<div class="a" style="left:108.36px;top:694.50px;width:11.49px;height:3.10px;background:#fff;"></div>
<div class="a" style="left:119.85px;top:694.50px;width:11.49px;height:3.10px;background:#fff;"></div>
<div class="a" style="left:131.34px;top:694.50px;width:11.49px;height:3.10px;background:#fff;"></div>
<div class="a" style="left:142.83px;top:694.50px;width:11.49px;height:3.10px;background:#dedede;"></div>
<div class="a" style="left:154.32px;top:694.50px;width:11.49px;height:3.10px;background:#fcd878;"></div>
<div class="a" style="left:165.81px;top:694.50px;width:11.49px;height:3.10px;background:#dedede;"></div>
<div class="a" style="left:62.40px;top:697.60px;width:11.49px;height:3.10px;background:#e3e3e3;"></div>
<div class="a" style="left:73.89px;top:697.60px;width:11.49px;height:3.10px;background:#fff;"></div>
<div class="a" style="left:85.38px;top:697.60px;width:11.49px;height:3.10px;background:#fff;"></div>
<div class="a" style="left:96.87px;top:697.60px;width:11.49px;height:3.10px;background:#fff;"></div>
<div class="a" style="left:108.36px;top:697.60px;width:11.49px;height:3.10px;background:#fff;"></div>
<div class="a" style="left:119.85px;top:697.60px;width:11.49px;height:3.10px;background:#fff;"></div>
<div class="a" style="left:131.34px;top:697.60px;width:11.49px;height:3.10px;background:#fff;"></div>
<div class="a" style="left:142.83px;top:697.60px;width:11.49px;height:3.10px;background:#dedede;"></div>
<div class="a" style="left:154.32px;top:697.60px;width:11.49px;height:3.10px;background:#fff;"></div>
<div class="a" style="left:165.81px;top:697.60px;width:11.49px;height:3.10px;background:#dedede;"></div>
<div class="a" style="left:62.40px;top:700.70px;width:11.49px;height:3.10px;background:#e3e3e3;"></div>
<div class="a" style="left:73.89px;top:700.70px;width:11.49px;height:3.10px;background:#fff;"></div>
<div class="a" style="left:85.38px;top:700.70px;width:11.49px;height:3.10px;background:#fff;"></div>
<div class="a" style="left:96.87px;top:700.70px;width:11.49px;height:3.10px;background:#fff;"></div>
<div class="a" style="left:108.36px;top:700.70px;width:11.49px;height:3.10px;background:#fff;"></div>
<div class="a" style="left:119.85px;top:700.70px;width:11.49px;height:3.10px;background:#fff;"></div>
<div class="a" style="left:131.34px;top:700.70px;width:11.49px;height:3.10px;background:#fff;"></div>
<div class="a" style="left:142.83px;top:700.70px;width:11.49px;height:3.10px;background:#dedede;"></div>
<div class="a" style="left:154.32px;top:700.70px;width:11.49px;height:3.10px;background:#fff;"></div>
<div class="a" style="left:165.81px;top:700.70px;width:11.49px;height:3.10px;background:#dedede;"></div>
<svg class="a" style="left:62.4px;top:659.2px" width="114.9" height="45" viewBox="0 0 114.9 45"><line x1="11.49" y1="3.9" x2="11.49" y2="44.6" stroke="#8a8a8a" stroke-width=".5"/><line x1="22.98" y1="3.9" x2="22.98" y2="44.6" stroke="#8a8a8a" stroke-width=".5"/><line x1="34.47" y1="3.9" x2="34.47" y2="44.6" stroke="#8a8a8a" stroke-width=".5"/><line x1="45.96" y1="3.9" x2="45.96" y2="44.6" stroke="#8a8a8a" stroke-width=".5"/><line x1="57.45" y1="3.9" x2="57.45" y2="44.6" stroke="#8a8a8a" stroke-width=".5"/><line x1="68.94" y1="3.9" x2="68.94" y2="44.6" stroke="#8a8a8a" stroke-width=".5"/><line x1="80.43" y1="3.9" x2="80.43" y2="44.6" stroke="#8a8a8a" stroke-width=".5"/><line x1="91.92" y1="3.9" x2="91.92" y2="44.6" stroke="#8a8a8a" stroke-width=".5"/><line x1="103.41" y1="3.9" x2="103.41" y2="44.6" stroke="#8a8a8a" stroke-width=".5"/><line x1="0" y1="10.50" x2="114.9" y2="10.50" stroke="#a0a0a0" stroke-width=".45"/><line x1="0" y1="13.60" x2="114.9" y2="13.60" stroke="#a0a0a0" stroke-width=".45"/><line x1="0" y1="16.70" x2="114.9" y2="16.70" stroke="#a0a0a0" stroke-width=".45"/><line x1="0" y1="19.80" x2="114.9" y2="19.80" stroke="#a0a0a0" stroke-width=".45"/><line x1="0" y1="22.90" x2="114.9" y2="22.90" stroke="#a0a0a0" stroke-width=".45"/><line x1="0" y1="26.00" x2="114.9" y2="26.00" stroke="#a0a0a0" stroke-width=".45"/><line x1="0" y1="29.10" x2="114.9" y2="29.10" stroke="#a0a0a0" stroke-width=".45"/><line x1="0" y1="32.20" x2="114.9" y2="32.20" stroke="#a0a0a0" stroke-width=".45"/><line x1="0" y1="35.30" x2="114.9" y2="35.30" stroke="#a0a0a0" stroke-width=".45"/><line x1="0" y1="38.40" x2="114.9" y2="38.40" stroke="#a0a0a0" stroke-width=".45"/><line x1="0" y1="41.50" x2="114.9" y2="41.50" stroke="#a0a0a0" stroke-width=".45"/><line x1="0" y1="44.60" x2="114.9" y2="44.60" stroke="#a0a0a0" stroke-width=".45"/><line x1="0" y1="3.9" x2="114.9" y2="3.9" stroke="#999" stroke-width=".35"/><rect x="48.45" y="1.4" width="18" height="1.3" fill="rgba(0,0,0,.35)"/><rect x="2.25" y="6.5" width="7" height="1.4" fill="rgba(0,0,0,.2)"/><rect x="13.73" y="6.5" width="7" height="1.4" fill="rgba(0,0,0,.2)"/><rect x="25.23" y="6.5" width="7" height="1.4" fill="rgba(0,0,0,.2)"/><rect x="36.71" y="6.5" width="7" height="1.4" fill="rgba(0,0,0,.2)"/><rect x="48.20" y="6.5" width="7" height="1.4" fill="rgba(0,0,0,.2)"/><rect x="59.70" y="6.5" width="7" height="1.4" fill="rgba(0,0,0,.2)"/><rect x="71.19" y="6.5" width="7" height="1.4" fill="rgba(0,0,0,.2)"/><rect x="82.68" y="6.5" width="7" height="1.4" fill="rgba(0,0,0,.2)"/><rect x="94.17" y="6.5" width="7" height="1.4" fill="rgba(0,0,0,.2)"/><rect x="105.66" y="6.5" width="7" height="1.4" fill="rgba(0,0,0,.2)"/><rect x="35.27" y="11.50" width="4.5" height="1.1" fill="rgba(0,0,0,.22)"/><rect x="92.72" y="11.50" width="4.5" height="1.1" fill="rgba(0,0,0,.22)"/><rect x="0.80" y="14.60" width="4.5" height="1.1" fill="rgba(0,0,0,.22)"/><rect x="12.29" y="14.60" width="3.2" height="1.1" fill="rgba(0,0,0,.22)"/><rect x="23.78" y="14.60" width="3.2" height="1.1" fill="rgba(0,0,0,.22)"/><rect x="69.74" y="14.60" width="4.5" height="1.1" fill="rgba(0,0,0,.22)"/><rect x="81.23" y="14.60" width="4.5" height="1.1" fill="rgba(0,0,0,.22)"/><rect x="92.72" y="14.60" width="4.5" height="1.1" fill="rgba(0,0,0,.22)"/><rect x="104.21" y="14.60" width="4.5" height="1.1" fill="rgba(0,0,0,.22)"/><rect x="0.80" y="17.70" width="4.5" height="1.1" fill="rgba(0,0,0,.22)"/><rect x="12.29" y="17.70" width="3.2" height="1.1" fill="rgba(0,0,0,.22)"/><rect x="23.78" y="17.70" width="3.2" height="1.1" fill="rgba(0,0,0,.22)"/><rect x="69.74" y="17.70" width="4.5" height="1.1" fill="rgba(0,0,0,.22)"/><rect x="81.23" y="17.70" width="4.5" height="1.1" fill="rgba(0,0,0,.22)"/><rect x="92.72" y="17.70" width="4.5" height="1.1" fill="rgba(0,0,0,.22)"/><rect x="104.21" y="17.70" width="4.5" height="1.1" fill="rgba(0,0,0,.22)"/><rect x="0.80" y="20.80" width="4.5" height="1.1" fill="rgba(0,0,0,.22)"/><rect x="12.29" y="20.80" width="3.2" height="1.1" fill="rgba(0,0,0,.22)"/><rect x="23.78" y="20.80" width="3.2" height="1.1" fill="rgba(0,0,0,.22)"/><rect x="69.74" y="20.80" width="4.5" height="1.1" fill="rgba(0,0,0,.22)"/><rect x="81.23" y="20.80" width="4.5" height="1.1" fill="rgba(0,0,0,.22)"/><rect x="92.72" y="20.80" width="4.5" height="1.1" fill="rgba(0,0,0,.22)"/><rect x="104.21" y="20.80" width="4.5" height="1.1" fill="rgba(0,0,0,.22)"/><rect x="0.80" y="23.90" width="4.5" height="1.1" fill="rgba(0,0,0,.22)"/><rect x="12.29" y="23.90" width="3.2" height="1.1" fill="rgba(0,0,0,.22)"/><rect x="23.78" y="23.90" width="3.2" height="1.1" fill="rgba(0,0,0,.22)"/><rect x="69.74" y="23.90" width="4.5" height="1.1" fill="rgba(0,0,0,.22)"/><rect x="81.23" y="23.90" width="4.5" height="1.1" fill="rgba(0,0,0,.22)"/><rect x="92.72" y="23.90" width="4.5" height="1.1" fill="rgba(0,0,0,.22)"/><rect x="104.21" y="23.90" width="4.5" height="1.1" fill="rgba(0,0,0,.22)"/><rect x="0.80" y="27.00" width="4.5" height="1.1" fill="rgba(0,0,0,.22)"/><rect x="12.29" y="27.00" width="3.2" height="1.1" fill="rgba(0,0,0,.22)"/><rect x="35.27" y="27.00" width="4.5" height="1.1" fill="rgba(0,0,0,.22)"/><rect x="58.25" y="27.00" width="4.5" height="1.1" fill="rgba(0,0,0,.22)"/><rect x="69.74" y="27.00" width="4.5" height="1.1" fill="rgba(0,0,0,.22)"/><rect x="92.72" y="27.00" width="4.5" height="1.1" fill="rgba(0,0,0,.22)"/><rect x="0.80" y="30.10" width="4.5" height="1.1" fill="rgba(0,0,0,.22)"/><rect x="12.29" y="30.10" width="3.2" height="1.1" fill="rgba(0,0,0,.22)"/><rect x="35.27" y="30.10" width="4.5" height="1.1" fill="rgba(0,0,0,.22)"/><rect x="58.25" y="30.10" width="4.5" height="1.1" fill="rgba(0,0,0,.22)"/><rect x="69.74" y="30.10" width="4.5" height="1.1" fill="rgba(0,0,0,.22)"/><rect x="92.72" y="30.10" width="4.5" height="1.1" fill="rgba(0,0,0,.22)"/><rect x="0.80" y="33.20" width="4.5" height="1.1" fill="rgba(0,0,0,.22)"/><rect x="12.29" y="33.20" width="3.2" height="1.1" fill="rgba(0,0,0,.22)"/><rect x="35.27" y="33.20" width="4.5" height="1.1" fill="rgba(0,0,0,.22)"/><rect x="58.25" y="33.20" width="4.5" height="1.1" fill="rgba(0,0,0,.22)"/><rect x="69.74" y="33.20" width="4.5" height="1.1" fill="rgba(0,0,0,.22)"/><rect x="92.72" y="33.20" width="4.5" height="1.1" fill="rgba(0,0,0,.22)"/><rect x="0.80" y="36.30" width="4.5" height="1.1" fill="rgba(0,0,0,.22)"/><rect x="12.29" y="36.30" width="3.2" height="1.1" fill="rgba(0,0,0,.22)"/><rect x="35.27" y="36.30" width="4.5" height="1.1" fill="rgba(0,0,0,.22)"/><rect x="58.25" y="36.30" width="4.5" height="1.1" fill="rgba(0,0,0,.22)"/><rect x="69.74" y="36.30" width="4.5" height="1.1" fill="rgba(0,0,0,.22)"/><rect x="92.72" y="36.30" width="4.5" height="1.1" fill="rgba(0,0,0,.22)"/><rect x="0.80" y="39.40" width="4.5" height="1.1" fill="rgba(0,0,0,.22)"/><rect x="12.29" y="39.40" width="3.2" height="1.1" fill="rgba(0,0,0,.22)"/><rect x="35.27" y="39.40" width="4.5" height="1.1" fill="rgba(0,0,0,.22)"/><rect x="58.25" y="39.40" width="4.5" height="1.1" fill="rgba(0,0,0,.22)"/><rect x="69.74" y="39.40" width="4.5" height="1.1" fill="rgba(0,0,0,.22)"/><rect x="92.72" y="39.40" width="4.5" height="1.1" fill="rgba(0,0,0,.22)"/><rect x="0.80" y="42.50" width="4.5" height="1.1" fill="rgba(0,0,0,.22)"/><rect x="12.29" y="42.50" width="3.2" height="1.1" fill="rgba(0,0,0,.22)"/><rect x="35.27" y="42.50" width="4.5" height="1.1" fill="rgba(0,0,0,.22)"/><rect x="58.25" y="42.50" width="4.5" height="1.1" fill="rgba(0,0,0,.22)"/><rect x="69.74" y="42.50" width="4.5" height="1.1" fill="rgba(0,0,0,.22)"/><rect x="92.72" y="42.50" width="4.5" height="1.1" fill="rgba(0,0,0,.22)"/></svg>
<div class="a" style="left:89.90px;top:603.30px;width:60.30px;height:11.80px;background:#f4994a;"></div>
<div class="t serif" style="left:89.9px;width:60.3px;text-align:center;top:605.5px;font-size:6.5px;color:#6a5848">2</div>
<div class="a" style="left:58.90px;top:750.70px;width:122.70px;height:172.00px;background:#fdfdfd;"></div>
<div class="a" style="left:114.40px;top:752.50px;width:13.50px;height:1.50px;background:rgba(0,0,0,.35);"></div>
<div class="a" style="left:62.40px;top:754.70px;width:114.90px;height:10.50px;background:#b3b3b3;"></div>
<div class="a" style="left:62.40px;top:765.20px;width:11.49px;height:3.10px;background:#fff;"></div>
<div class="a" style="left:73.89px;top:765.20px;width:11.49px;height:3.10px;background:#fff;"></div>
<div class="a" style="left:85.38px;top:765.20px;width:11.49px;height:3.10px;background:#fff;"></div>
<div class="a" style="left:96.87px;top:765.20px;width:11.49px;height:3.10px;background:#fff;"></div>
<div class="a" style="left:108.36px;top:765.20px;width:11.49px;height:3.10px;background:#fff;"></div>
<div class="a" style="left:119.85px;top:765.20px;width:11.49px;height:3.10px;background:#fff;"></div>
<div class="a" style="left:131.34px;top:765.20px;width:11.49px;height:3.10px;background:#fff;"></div>
<div class="a" style="left:142.83px;top:765.20px;width:11.49px;height:3.10px;background:#fff;"></div>
<div class="a" style="left:154.32px;top:765.20px;width:11.49px;height:3.10px;background:#fff;"></div>
<div class="a" style="left:165.81px;top:765.20px;width:11.49px;height:3.10px;background:#fff;"></div>
<div class="a" style="left:62.40px;top:768.30px;width:11.49px;height:3.10px;background:#fcd878;"></div>
<div class="a" style="left:73.89px;top:768.30px;width:11.49px;height:3.10px;background:#fff;"></div>
<div class="a" style="left:85.38px;top:768.30px;width:11.49px;height:3.10px;background:#fff;"></div>
<div class="a" style="left:96.87px;top:768.30px;width:11.49px;height:3.10px;background:#fff;"></div>
<div class="a" style="left:108.36px;top:768.30px;width:11.49px;height:3.10px;background:#fff;"></div>
<div class="a" style="left:119.85px;top:768.30px;width:11.49px;height:3.10px;background:#fff;"></div>
<div class="a" style="left:131.34px;top:768.30px;width:11.49px;height:3.10px;background:#fff;"></div>
<div class="a" style="left:142.83px;top:768.30px;width:11.49px;height:3.10px;background:#dedede;"></div>
<div class="a" style="left:154.32px;top:768.30px;width:11.49px;height:3.10px;background:#fff;"></div>
<div class="a" style="left:165.81px;top:768.30px;width:11.49px;height:3.10px;background:#dedede;"></div>
<div class="a" style="left:62.40px;top:771.40px;width:11.49px;height:3.10px;background:#fcd878;"></div>
<div class="a" style="left:73.89px;top:771.40px;width:11.49px;height:3.10px;background:#fff;"></div>
<div class="a" style="left:85.38px;top:771.40px;width:11.49px;height:3.10px;background:#fff;"></div>
<div class="a" style="left:96.87px;top:771.40px;width:11.49px;height:3.10px;background:#fff;"></div>
<div class="a" style="left:108.36px;top:771.40px;width:11.49px;height:3.10px;background:#fff;"></div>
<div class="a" style="left:119.85px;top:771.40px;width:11.49px;height:3.10px;background:#fff;"></div>
<div class="a" style="left:131.34px;top:771.40px;width:11.49px;height:3.10px;background:#fff;"></div>
<div class="a" style="left:142.83px;top:771.40px;width:11.49px;height:3.10px;background:#dedede;"></div>
<div class="a" style="left:154.32px;top:771.40px;width:11.49px;height:3.10px;background:#fff;"></div>
<div class="a" style="left:165.81px;top:771.40px;width:11.49px;height:3.10px;background:#dedede;"></div>
<div class="a" style="left:62.40px;top:774.50px;width:11.49px;height:3.10px;background:#fcd878;"></div>
<div class="a" style="left:73.89px;top:774.50px;width:11.49px;height:3.10px;background:#fff;"></div>
<div class="a" style="left:85.38px;top:774.50px;width:11.49px;height:3.10px;background:#fff;"></div>
<div class="a" style="left:96.87px;top:774.50px;width:11.49px;height:3.10px;background:#fff;"></div>
<div class="a" style="left:108.36px;top:774.50px;width:11.49px;height:3.10px;background:#fff;"></div>
<div class="a" style="left:119.85px;top:774.50px;width:11.49px;height:3.10px;background:#fff;"></div>
<div class="a" style="left:131.34px;top:774.50px;width:11.49px;height:3.10px;background:#fff;"></div>
<div class="a" style="left:142.83px;top:774.50px;width:11.49px;height:3.10px;background:#dedede;"></div>
<div class="a" style="left:154.32px;top:774.50px;width:11.49px;height:3.10px;background:#fff;"></div>
<div class="a" style="left:165.81px;top:774.50px;width:11.49px;height:3.10px;background:#dedede;"></div>
<div class="a" style="left:62.40px;top:777.60px;width:11.49px;height:3.10px;background:#fcd878;"></div>
<div class="a" style="left:73.89px;top:777.60px;width:11.49px;height:3.10px;background:#fff;"></div>
<div class="a" style="left:85.38px;top:777.60px;width:11.49px;height:3.10px;background:#fff;"></div>
<div class="a" style="left:96.87px;top:777.60px;width:11.49px;height:3.10px;background:#fff;"></div>
<div class="a" style="left:108.36px;top:777.60px;width:11.49px;height:3.10px;background:#fff;"></div>
<div class="a" style="left:119.85px;top:777.60px;width:11.49px;height:3.10px;background:#fff;"></div>
<div class="a" style="left:131.34px;top:777.60px;width:11.49px;height:3.10px;background:#fff;"></div>
<div class="a" style="left:142.83px;top:777.60px;width:11.49px;height:3.10px;background:#dedede;"></div>
<div class="a" style="left:154.32px;top:777.60px;width:11.49px;height:3.10px;background:#fff;"></div>
<div class="a" style="left:165.81px;top:777.60px;width:11.49px;height:3.10px;background:#dedede;"></div>
<div class="a" style="left:62.40px;top:780.70px;width:11.49px;height:3.10px;background:#fcd878;"></div>
<div class="a" style="left:73.89px;top:780.70px;width:11.49px;height:3.10px;background:#fff;"></div>
<div class="a" style="left:85.38px;top:780.70px;width:11.49px;height:3.10px;background:#fff;"></div>
<div class="a" style="left:96.87px;top:780.70px;width:11.49px;height:3.10px;background:#fff;"></div>
<div class="a" style="left:108.36px;top:780.70px;width:11.49px;height:3.10px;background:#fff;"></div>
<div class="a" style="left:119.85px;top:780.70px;width:11.49px;height:3.10px;background:#fff;"></div>
<div class="a" style="left:131.34px;top:780.70px;width:11.49px;height:3.10px;background:#fff;"></div>
<div class="a" style="left:142.83px;top:780.70px;width:11.49px;height:3.10px;background:#dedede;"></div>
<div class="a" style="left:154.32px;top:780.70px;width:11.49px;height:3.10px;background:#fcd878;"></div>
<div class="a" style="left:165.81px;top:780.70px;width:11.49px;height:3.10px;background:#dedede;"></div>
<div class="a" style="left:62.40px;top:783.80px;width:11.49px;height:3.10px;background:#fcd878;"></div>
<div class="a" style="left:73.89px;top:783.80px;width:11.49px;height:3.10px;background:#fff;"></div>
<div class="a" style="left:85.38px;top:783.80px;width:11.49px;height:3.10px;background:#fff;"></div>
<div class="a" style="left:96.87px;top:783.80px;width:11.49px;height:3.10px;background:#fff;"></div>
<div class="a" style="left:108.36px;top:783.80px;width:11.49px;height:3.10px;background:#fff;"></div>
<div class="a" style="left:119.85px;top:783.80px;width:11.49px;height:3.10px;background:#fff;"></div>
<div class="a" style="left:131.34px;top:783.80px;width:11.49px;height:3.10px;background:#fff;"></div>
<div class="a" style="left:142.83px;top:783.80px;width:11.49px;height:3.10px;background:#dedede;"></div>
<div class="a" style="left:154.32px;top:783.80px;width:11.49px;height:3.10px;background:#fcd878;"></div>
<div class="a" style="left:165.81px;top:783.80px;width:11.49px;height:3.10px;background:#dedede;"></div>
<div class="a" style="left:62.40px;top:786.90px;width:11.49px;height:3.10px;background:#fcd878;"></div>
<div class="a" style="left:73.89px;top:786.90px;width:11.49px;height:3.10px;background:#fff;"></div>
<div class="a" style="left:85.38px;top:786.90px;width:11.49px;height:3.10px;background:#fff;"></div>
<div class="a" style="left:96.87px;top:786.90px;width:11.49px;height:3.10px;background:#fff;"></div>
<div class="a" style="left:108.36px;top:786.90px;width:11.49px;height:3.10px;background:#fff;"></div>
<div class="a" style="left:119.85px;top:786.90px;width:11.49px;height:3.10px;background:#fff;"></div>
<div class="a" style="left:131.34px;top:786.90px;width:11.49px;height:3.10px;background:#fff;"></div>
<div class="a" style="left:142.83px;top:786.90px;width:11.49px;height:3.10px;background:#dedede;"></div>
<div class="a" style="left:154.32px;top:786.90px;width:11.49px;height:3.10px;background:#fcd878;"></div>
<div class="a" style="left:165.81px;top:786.90px;width:11.49px;height:3.10px;background:#dedede;"></div>
<div class="a" style="left:62.40px;top:790.00px;width:11.49px;height:3.10px;background:#e3e3e3;"></div>
<div class="a" style="left:73.89px;top:790.00px;width:11.49px;height:3.10px;background:#fff;"></div>
<div class="a" style="left:85.38px;top:790.00px;width:11.49px;height:3.10px;background:#fff;"></div>
<div class="a" style="left:96.87px;top:790.00px;width:11.49px;height:3.10px;background:#fff;"></div>
<div class="a" style="left:108.36px;top:790.00px;width:11.49px;height:3.10px;background:#fff;"></div>
<div class="a" style="left:119.85px;top:790.00px;width:11.49px;height:3.10px;background:#fff;"></div>
<div class="a" style="left:131.34px;top:790.00px;width:11.49px;height:3.10px;background:#fff;"></div>
<div class="a" style="left:142.83px;top:790.00px;width:11.49px;height:3.10px;background:#dedede;"></div>
<div class="a" style="left:154.32px;top:790.00px;width:11.49px;height:3.10px;background:#fcd878;"></div>
<div class="a" style="left:165.81px;top:790.00px;width:11.49px;height:3.10px;background:#dedede;"></div>
<div class="a" style="left:62.40px;top:793.10px;width:11.49px;height:3.10px;background:#e3e3e3;"></div>
<div class="a" style="left:73.89px;top:793.10px;width:11.49px;height:3.10px;background:#fff;"></div>
<div class="a" style="left:85.38px;top:793.10px;width:11.49px;height:3.10px;background:#fff;"></div>
<div class="a" style="left:96.87px;top:793.10px;width:11.49px;height:3.10px;background:#fff;"></div>
<div class="a" style="left:108.36px;top:793.10px;width:11.49px;height:3.10px;background:#fff;"></div>
<div class="a" style="left:119.85px;top:793.10px;width:11.49px;height:3.10px;background:#fff;"></div>
<div class="a" style="left:131.34px;top:793.10px;width:11.49px;height:3.10px;background:#fff;"></div>
<div class="a" style="left:142.83px;top:793.10px;width:11.49px;height:3.10px;background:#dedede;"></div>
<div class="a" style="left:154.32px;top:793.10px;width:11.49px;height:3.10px;background:#fff;"></div>
<div class="a" style="left:165.81px;top:793.10px;width:11.49px;height:3.10px;background:#dedede;"></div>
<div class="a" style="left:62.40px;top:796.20px;width:11.49px;height:3.10px;background:#e3e3e3;"></div>
<div class="a" style="left:73.89px;top:796.20px;width:11.49px;height:3.10px;background:#fff;"></div>
<div class="a" style="left:85.38px;top:796.20px;width:11.49px;height:3.10px;background:#fff;"></div>
<div class="a" style="left:96.87px;top:796.20px;width:11.49px;height:3.10px;background:#fff;"></div>
<div class="a" style="left:108.36px;top:796.20px;width:11.49px;height:3.10px;background:#fff;"></div>
<div class="a" style="left:119.85px;top:796.20px;width:11.49px;height:3.10px;background:#fff;"></div>
<div class="a" style="left:131.34px;top:796.20px;width:11.49px;height:3.10px;background:#fff;"></div>
<div class="a" style="left:142.83px;top:796.20px;width:11.49px;height:3.10px;background:#dedede;"></div>
<div class="a" style="left:154.32px;top:796.20px;width:11.49px;height:3.10px;background:#fff;"></div>
<div class="a" style="left:165.81px;top:796.20px;width:11.49px;height:3.10px;background:#dedede;"></div>
<svg class="a" style="left:62.4px;top:754.7px" width="114.9" height="45" viewBox="0 0 114.9 45"><line x1="11.49" y1="3.9" x2="11.49" y2="44.6" stroke="#8a8a8a" stroke-width=".5"/><line x1="22.98" y1="3.9" x2="22.98" y2="44.6" stroke="#8a8a8a" stroke-width=".5"/><line x1="34.47" y1="3.9" x2="34.47" y2="44.6" stroke="#8a8a8a" stroke-width=".5"/><line x1="45.96" y1="3.9" x2="45.96" y2="44.6" stroke="#8a8a8a" stroke-width=".5"/><line x1="57.45" y1="3.9" x2="57.45" y2="44.6" stroke="#8a8a8a" stroke-width=".5"/><line x1="68.94" y1="3.9" x2="68.94" y2="44.6" stroke="#8a8a8a" stroke-width=".5"/><line x1="80.43" y1="3.9" x2="80.43" y2="44.6" stroke="#8a8a8a" stroke-width=".5"/><line x1="91.92" y1="3.9" x2="91.92" y2="44.6" stroke="#8a8a8a" stroke-width=".5"/><line x1="103.41" y1="3.9" x2="103.41" y2="44.6" stroke="#8a8a8a" stroke-width=".5"/><line x1="0" y1="10.50" x2="114.9" y2="10.50" stroke="#a0a0a0" stroke-width=".45"/><line x1="0" y1="13.60" x2="114.9" y2="13.60" stroke="#a0a0a0" stroke-width=".45"/><line x1="0" y1="16.70" x2="114.9" y2="16.70" stroke="#a0a0a0" stroke-width=".45"/><line x1="0" y1="19.80" x2="114.9" y2="19.80" stroke="#a0a0a0" stroke-width=".45"/><line x1="0" y1="22.90" x2="114.9" y2="22.90" stroke="#a0a0a0" stroke-width=".45"/><line x1="0" y1="26.00" x2="114.9" y2="26.00" stroke="#a0a0a0" stroke-width=".45"/><line x1="0" y1="29.10" x2="114.9" y2="29.10" stroke="#a0a0a0" stroke-width=".45"/><line x1="0" y1="32.20" x2="114.9" y2="32.20" stroke="#a0a0a0" stroke-width=".45"/><line x1="0" y1="35.30" x2="114.9" y2="35.30" stroke="#a0a0a0" stroke-width=".45"/><line x1="0" y1="38.40" x2="114.9" y2="38.40" stroke="#a0a0a0" stroke-width=".45"/><line x1="0" y1="41.50" x2="114.9" y2="41.50" stroke="#a0a0a0" stroke-width=".45"/><line x1="0" y1="44.60" x2="114.9" y2="44.60" stroke="#a0a0a0" stroke-width=".45"/><line x1="0" y1="3.9" x2="114.9" y2="3.9" stroke="#999" stroke-width=".35"/><rect x="48.45" y="1.4" width="18" height="1.3" fill="rgba(0,0,0,.35)"/><rect x="2.25" y="6.5" width="7" height="1.4" fill="rgba(0,0,0,.2)"/><rect x="13.73" y="6.5" width="7" height="1.4" fill="rgba(0,0,0,.2)"/><rect x="25.23" y="6.5" width="7" height="1.4" fill="rgba(0,0,0,.2)"/><rect x="36.71" y="6.5" width="7" height="1.4" fill="rgba(0,0,0,.2)"/><rect x="48.20" y="6.5" width="7" height="1.4" fill="rgba(0,0,0,.2)"/><rect x="59.70" y="6.5" width="7" height="1.4" fill="rgba(0,0,0,.2)"/><rect x="71.19" y="6.5" width="7" height="1.4" fill="rgba(0,0,0,.2)"/><rect x="82.68" y="6.5" width="7" height="1.4" fill="rgba(0,0,0,.2)"/><rect x="94.17" y="6.5" width="7" height="1.4" fill="rgba(0,0,0,.2)"/><rect x="105.66" y="6.5" width="7" height="1.4" fill="rgba(0,0,0,.2)"/><rect x="35.27" y="11.50" width="4.5" height="1.1" fill="rgba(0,0,0,.22)"/><rect x="92.72" y="11.50" width="4.5" height="1.1" fill="rgba(0,0,0,.22)"/><rect x="0.80" y="14.60" width="4.5" height="1.1" fill="rgba(0,0,0,.22)"/><rect x="12.29" y="14.60" width="3.2" height="1.1" fill="rgba(0,0,0,.22)"/><rect x="23.78" y="14.60" width="3.2" height="1.1" fill="rgba(0,0,0,.22)"/><rect x="69.74" y="14.60" width="4.5" height="1.1" fill="rgba(0,0,0,.22)"/><rect x="81.23" y="14.60" width="4.5" height="1.1" fill="rgba(0,0,0,.22)"/><rect x="92.72" y="14.60" width="4.5" height="1.1" fill="rgba(0,0,0,.22)"/><rect x="104.21" y="14.60" width="4.5" height="1.1" fill="rgba(0,0,0,.22)"/><rect x="0.80" y="17.70" width="4.5" height="1.1" fill="rgba(0,0,0,.22)"/><rect x="12.29" y="17.70" width="3.2" height="1.1" fill="rgba(0,0,0,.22)"/><rect x="23.78" y="17.70" width="3.2" height="1.1" fill="rgba(0,0,0,.22)"/><rect x="69.74" y="17.70" width="4.5" height="1.1" fill="rgba(0,0,0,.22)"/><rect x="81.23" y="17.70" width="4.5" height="1.1" fill="rgba(0,0,0,.22)"/><rect x="92.72" y="17.70" width="4.5" height="1.1" fill="rgba(0,0,0,.22)"/><rect x="104.21" y="17.70" width="4.5" height="1.1" fill="rgba(0,0,0,.22)"/><rect x="0.80" y="20.80" width="4.5" height="1.1" fill="rgba(0,0,0,.22)"/><rect x="12.29" y="20.80" width="3.2" height="1.1" fill="rgba(0,0,0,.22)"/><rect x="23.78" y="20.80" width="3.2" height="1.1" fill="rgba(0,0,0,.22)"/><rect x="69.74" y="20.80" width="4.5" height="1.1" fill="rgba(0,0,0,.22)"/><rect x="81.23" y="20.80" width="4.5" height="1.1" fill="rgba(0,0,0,.22)"/><rect x="92.72" y="20.80" width="4.5" height="1.1" fill="rgba(0,0,0,.22)"/><rect x="104.21" y="20.80" width="4.5" height="1.1" fill="rgba(0,0,0,.22)"/><rect x="0.80" y="23.90" width="4.5" height="1.1" fill="rgba(0,0,0,.22)"/><rect x="12.29" y="23.90" width="3.2" height="1.1" fill="rgba(0,0,0,.22)"/><rect x="23.78" y="23.90" width="3.2" height="1.1" fill="rgba(0,0,0,.22)"/><rect x="69.74" y="23.90" width="4.5" height="1.1" fill="rgba(0,0,0,.22)"/><rect x="81.23" y="23.90" width="4.5" height="1.1" fill="rgba(0,0,0,.22)"/><rect x="92.72" y="23.90" width="4.5" height="1.1" fill="rgba(0,0,0,.22)"/><rect x="104.21" y="23.90" width="4.5" height="1.1" fill="rgba(0,0,0,.22)"/><rect x="0.80" y="27.00" width="4.5" height="1.1" fill="rgba(0,0,0,.22)"/><rect x="12.29" y="27.00" width="3.2" height="1.1" fill="rgba(0,0,0,.22)"/><rect x="35.27" y="27.00" width="4.5" height="1.1" fill="rgba(0,0,0,.22)"/><rect x="58.25" y="27.00" width="4.5" height="1.1" fill="rgba(0,0,0,.22)"/><rect x="69.74" y="27.00" width="4.5" height="1.1" fill="rgba(0,0,0,.22)"/><rect x="92.72" y="27.00" width="4.5" height="1.1" fill="rgba(0,0,0,.22)"/><rect x="0.80" y="30.10" width="4.5" height="1.1" fill="rgba(0,0,0,.22)"/><rect x="12.29" y="30.10" width="3.2" height="1.1" fill="rgba(0,0,0,.22)"/><rect x="35.27" y="30.10" width="4.5" height="1.1" fill="rgba(0,0,0,.22)"/><rect x="58.25" y="30.10" width="4.5" height="1.1" fill="rgba(0,0,0,.22)"/><rect x="69.74" y="30.10" width="4.5" height="1.1" fill="rgba(0,0,0,.22)"/><rect x="92.72" y="30.10" width="4.5" height="1.1" fill="rgba(0,0,0,.22)"/><rect x="0.80" y="33.20" width="4.5" height="1.1" fill="rgba(0,0,0,.22)"/><rect x="12.29" y="33.20" width="3.2" height="1.1" fill="rgba(0,0,0,.22)"/><rect x="35.27" y="33.20" width="4.5" height="1.1" fill="rgba(0,0,0,.22)"/><rect x="58.25" y="33.20" width="4.5" height="1.1" fill="rgba(0,0,0,.22)"/><rect x="69.74" y="33.20" width="4.5" height="1.1" fill="rgba(0,0,0,.22)"/><rect x="92.72" y="33.20" width="4.5" height="1.1" fill="rgba(0,0,0,.22)"/><rect x="0.80" y="36.30" width="4.5" height="1.1" fill="rgba(0,0,0,.22)"/><rect x="12.29" y="36.30" width="3.2" height="1.1" fill="rgba(0,0,0,.22)"/><rect x="35.27" y="36.30" width="4.5" height="1.1" fill="rgba(0,0,0,.22)"/><rect x="58.25" y="36.30" width="4.5" height="1.1" fill="rgba(0,0,0,.22)"/><rect x="69.74" y="36.30" width="4.5" height="1.1" fill="rgba(0,0,0,.22)"/><rect x="92.72" y="36.30" width="4.5" height="1.1" fill="rgba(0,0,0,.22)"/><rect x="0.80" y="39.40" width="4.5" height="1.1" fill="rgba(0,0,0,.22)"/><rect x="12.29" y="39.40" width="3.2" height="1.1" fill="rgba(0,0,0,.22)"/><rect x="35.27" y="39.40" width="4.5" height="1.1" fill="rgba(0,0,0,.22)"/><rect x="58.25" y="39.40" width="4.5" height="1.1" fill="rgba(0,0,0,.22)"/><rect x="69.74" y="39.40" width="4.5" height="1.1" fill="rgba(0,0,0,.22)"/><rect x="92.72" y="39.40" width="4.5" height="1.1" fill="rgba(0,0,0,.22)"/><rect x="0.80" y="42.50" width="4.5" height="1.1" fill="rgba(0,0,0,.22)"/><rect x="12.29" y="42.50" width="3.2" height="1.1" fill="rgba(0,0,0,.22)"/><rect x="35.27" y="42.50" width="4.5" height="1.1" fill="rgba(0,0,0,.22)"/><rect x="58.25" y="42.50" width="4.5" height="1.1" fill="rgba(0,0,0,.22)"/><rect x="69.74" y="42.50" width="4.5" height="1.1" fill="rgba(0,0,0,.22)"/><rect x="92.72" y="42.50" width="4.5" height="1.1" fill="rgba(0,0,0,.22)"/></svg>
<div class="a" style="left:62.40px;top:804.50px;width:114.90px;height:10.50px;background:#b3b3b3;"></div>
<div class="a" style="left:62.40px;top:815.00px;width:11.49px;height:3.10px;background:#fff;"></div>
<div class="a" style="left:73.89px;top:815.00px;width:11.49px;height:3.10px;background:#fff;"></div>
<div class="a" style="left:85.38px;top:815.00px;width:11.49px;height:3.10px;background:#fff;"></div>
<div class="a" style="left:96.87px;top:815.00px;width:11.49px;height:3.10px;background:#fff;"></div>
<div class="a" style="left:108.36px;top:815.00px;width:11.49px;height:3.10px;background:#fff;"></div>
<div class="a" style="left:119.85px;top:815.00px;width:11.49px;height:3.10px;background:#fff;"></div>
<div class="a" style="left:131.34px;top:815.00px;width:11.49px;height:3.10px;background:#fff;"></div>
<div class="a" style="left:142.83px;top:815.00px;width:11.49px;height:3.10px;background:#fff;"></div>
<div class="a" style="left:154.32px;top:815.00px;width:11.49px;height:3.10px;background:#fff;"></div>
<div class="a" style="left:165.81px;top:815.00px;width:11.49px;height:3.10px;background:#fff;"></div>
<div class="a" style="left:62.40px;top:818.10px;width:11.49px;height:3.10px;background:#fcd878;"></div>
<div class="a" style="left:73.89px;top:818.10px;width:11.49px;height:3.10px;background:#fff;"></div>
<div class="a" style="left:85.38px;top:818.10px;width:11.49px;height:3.10px;background:#fff;"></div>
<div class="a" style="left:96.87px;top:818.10px;width:11.49px;height:3.10px;background:#fff;"></div>
<div class="a" style="left:108.36px;top:818.10px;width:11.49px;height:3.10px;background:#fff;"></div>
<div class="a" style="left:119.85px;top:818.10px;width:11.49px;height:3.10px;background:#fff;"></div>
<div class="a" style="left:131.34px;top:818.10px;width:11.49px;height:3.10px;background:#fff;"></div>
<div class="a" style="left:142.83px;top:818.10px;width:11.49px;height:3.10px;background:#dedede;"></div>
<div class="a" style="left:154.32px;top:818.10px;width:11.49px;height:3.10px;background:#fff;"></div>
<div class="a" style="left:165.81px;top:818.10px;width:11.49px;height:3.10px;background:#dedede;"></div>
<div class="a" style="left:62.40px;top:821.20px;width:11.49px;height:3.10px;background:#fcd878;"></div>
<div class="a" style="left:73.89px;top:821.20px;width:11.49px;height:3.10px;background:#fff;"></div>
<div class="a" style="left:85.38px;top:821.20px;width:11.49px;height:3.10px;background:#fff;"></div>
<div class="a" style="left:96.87px;top:821.20px;width:11.49px;height:3.10px;background:#fff;"></div>
<div class="a" style="left:108.36px;top:821.20px;width:11.49px;height:3.10px;background:#fff;"></div>
<div class="a" style="left:119.85px;top:821.20px;width:11.49px;height:3.10px;background:#fff;"></div>
<div class="a" style="left:131.34px;top:821.20px;width:11.49px;height:3.10px;background:#fff;"></div>
<div class="a" style="left:142.83px;top:821.20px;width:11.49px;height:3.10px;background:#dedede;"></div>
<div class="a" style="left:154.32px;top:821.20px;width:11.49px;height:3.10px;background:#fff;"></div>
<div class="a" style="left:165.81px;top:821.20px;width:11.49px;height:3.10px;background:#dedede;"></div>
<div class="a" style="left:62.40px;top:824.30px;width:11.49px;height:3.10px;background:#fcd878;"></div>
<div class="a" style="left:73.89px;top:824.30px;width:11.49px;height:3.10px;background:#fff;"></div>
<div class="a" style="left:85.38px;top:824.30px;width:11.49px;height:3.10px;background:#fff;"></div>
<div class="a" style="left:96.87px;top:824.30px;width:11.49px;height:3.10px;background:#fff;"></div>
<div class="a" style="left:108.36px;top:824.30px;width:11.49px;height:3.10px;background:#fff;"></div>
<div class="a" style="left:119.85px;top:824.30px;width:11.49px;height:3.10px;background:#fff;"></div>
<div class="a" style="left:131.34px;top:824.30px;width:11.49px;height:3.10px;background:#fff;"></div>
<div class="a" style="left:142.83px;top:824.30px;width:11.49px;height:3.10px;background:#dedede;"></div>
<div class="a" style="left:154.32px;top:824.30px;width:11.49px;height:3.10px;background:#fff;"></div>
<div class="a" style="left:165.81px;top:824.30px;width:11.49px;height:3.10px;background:#dedede;"></div>
<div class="a" style="left:62.40px;top:827.40px;width:11.49px;height:3.10px;background:#fcd878;"></div>
<div class="a" style="left:73.89px;top:827.40px;width:11.49px;height:3.10px;background:#fff;"></div>
<div class="a" style="left:85.38px;top:827.40px;width:11.49px;height:3.10px;background:#fff;"></div>
<div class="a" style="left:96.87px;top:827.40px;width:11.49px;height:3.10px;background:#fff;"></div>
<div class="a" style="left:108.36px;top:827.40px;width:11.49px;height:3.10px;background:#fff;"></div>
<div class="a" style="left:119.85px;top:827.40px;width:11.49px;height:3.10px;background:#fff;"></div>
<div class="a" style="left:131.34px;top:827.40px;width:11.49px;height:3.10px;background:#fff;"></div>
<div class="a" style="left:142.83px;top:827.40px;width:11.49px;height:3.10px;background:#dedede;"></div>
<div class="a" style="left:154.32px;top:827.40px;width:11.49px;height:3.10px;background:#fff;"></div>
<div class="a" style="left:165.81px;top:827.40px;width:11.49px;height:3.10px;background:#dedede;"></div>
<div class="a" style="left:62.40px;top:830.50px;width:11.49px;height:3.10px;background:#fcd878;"></div>
<div class="a" style="left:73.89px;top:830.50px;width:11.49px;height:3.10px;background:#fff;"></div>
<div class="a" style="left:85.38px;top:830.50px;width:11.49px;height:3.10px;background:#fff;"></div>
<div class="a" style="left:96.87px;top:830.50px;width:11.49px;height:3.10px;background:#fff;"></div>
<div class="a" style="left:108.36px;top:830.50px;width:11.49px;height:3.10px;background:#fff;"></div>
<div class="a" style="left:119.85px;top:830.50px;width:11.49px;height:3.10px;background:#fff;"></div>
<div class="a" style="left:131.34px;top:830.50px;width:11.49px;height:3.10px;background:#fff;"></div>
<div class="a" style="left:142.83px;top:830.50px;width:11.49px;height:3.10px;background:#dedede;"></div>
<div class="a" style="left:154.32px;top:830.50px;width:11.49px;height:3.10px;background:#fcd878;"></div>
<div class="a" style="left:165.81px;top:830.50px;width:11.49px;height:3.10px;background:#dedede;"></div>
<div class="a" style="left:62.40px;top:833.60px;width:11.49px;height:3.10px;background:#fcd878;"></div>
<div class="a" style="left:73.89px;top:833.60px;width:11.49px;height:3.10px;background:#fff;"></div>
<div class="a" style="left:85.38px;top:833.60px;width:11.49px;height:3.10px;background:#fff;"></div>
<div class="a" style="left:96.87px;top:833.60px;width:11.49px;height:3.10px;background:#fff;"></div>
<div class="a" style="left:108.36px;top:833.60px;width:11.49px;height:3.10px;background:#fff;"></div>
<div class="a" style="left:119.85px;top:833.60px;width:11.49px;height:3.10px;background:#fff;"></div>
<div class="a" style="left:131.34px;top:833.60px;width:11.49px;height:3.10px;background:#fff;"></div>
<div class="a" style="left:142.83px;top:833.60px;width:11.49px;height:3.10px;background:#dedede;"></div>
<div class="a" style="left:154.32px;top:833.60px;width:11.49px;height:3.10px;background:#fcd878;"></div>
<div class="a" style="left:165.81px;top:833.60px;width:11.49px;height:3.10px;background:#dedede;"></div>
<div class="a" style="left:62.40px;top:836.70px;width:11.49px;height:3.10px;background:#fcd878;"></div>
<div class="a" style="left:73.89px;top:836.70px;width:11.49px;height:3.10px;background:#fff;"></div>
<div class="a" style="left:85.38px;top:836.70px;width:11.49px;height:3.10px;background:#fff;"></div>
<div class="a" style="left:96.87px;top:836.70px;width:11.49px;height:3.10px;background:#fff;"></div>
<div class="a" style="left:108.36px;top:836.70px;width:11.49px;height:3.10px;background:#fff;"></div>
<div class="a" style="left:119.85px;top:836.70px;width:11.49px;height:3.10px;background:#fff;"></div>
<div class="a" style="left:131.34px;top:836.70px;width:11.49px;height:3.10px;background:#fff;"></div>
<div class="a" style="left:142.83px;top:836.70px;width:11.49px;height:3.10px;background:#dedede;"></div>
<div class="a" style="left:154.32px;top:836.70px;width:11.49px;height:3.10px;background:#fcd878;"></div>
<div class="a" style="left:165.81px;top:836.70px;width:11.49px;height:3.10px;background:#dedede;"></div>
<div class="a" style="left:62.40px;top:839.80px;width:11.49px;height:3.10px;background:#e3e3e3;"></div>
<div class="a" style="left:73.89px;top:839.80px;width:11.49px;height:3.10px;background:#fff;"></div>
<div class="a" style="left:85.38px;top:839.80px;width:11.49px;height:3.10px;background:#fff;"></div>
<div class="a" style="left:96.87px;top:839.80px;width:11.49px;height:3.10px;background:#fff;"></div>
<div class="a" style="left:108.36px;top:839.80px;width:11.49px;height:3.10px;background:#fff;"></div>
<div class="a" style="left:119.85px;top:839.80px;width:11.49px;height:3.10px;background:#fff;"></div>
<div class="a" style="left:131.34px;top:839.80px;width:11.49px;height:3.10px;background:#fff;"></div>
<div class="a" style="left:142.83px;top:839.80px;width:11.49px;height:3.10px;background:#dedede;"></div>
<div class="a" style="left:154.32px;top:839.80px;width:11.49px;height:3.10px;background:#fcd878;"></div>
<div class="a" style="left:165.81px;top:839.80px;width:11.49px;height:3.10px;background:#dedede;"></div>
<div class="a" style="left:62.40px;top:842.90px;width:11.49px;height:3.10px;background:#e3e3e3;"></div>
<div class="a" style="left:73.89px;top:842.90px;width:11.49px;height:3.10px;background:#fff;"></div>
<div class="a" style="left:85.38px;top:842.90px;width:11.49px;height:3.10px;background:#fff;"></div>
<div class="a" style="left:96.87px;top:842.90px;width:11.49px;height:3.10px;background:#fff;"></div>
<div class="a" style="left:108.36px;top:842.90px;width:11.49px;height:3.10px;background:#fff;"></div>
<div class="a" style="left:119.85px;top:842.90px;width:11.49px;height:3.10px;background:#fff;"></div>
<div class="a" style="left:131.34px;top:842.90px;width:11.49px;height:3.10px;background:#fff;"></div>
<div class="a" style="left:142.83px;top:842.90px;width:11.49px;height:3.10px;background:#dedede;"></div>
<div class="a" style="left:154.32px;top:842.90px;width:11.49px;height:3.10px;background:#fff;"></div>
<div class="a" style="left:165.81px;top:842.90px;width:11.49px;height:3.10px;background:#dedede;"></div>
<div class="a" style="left:62.40px;top:846.00px;width:11.49px;height:3.10px;background:#e3e3e3;"></div>
<div class="a" style="left:73.89px;top:846.00px;width:11.49px;height:3.10px;background:#fff;"></div>
<div class="a" style="left:85.38px;top:846.00px;width:11.49px;height:3.10px;background:#fff;"></div>
<div class="a" style="left:96.87px;top:846.00px;width:11.49px;height:3.10px;background:#fff;"></div>
<div class="a" style="left:108.36px;top:846.00px;width:11.49px;height:3.10px;background:#fff;"></div>
<div class="a" style="left:119.85px;top:846.00px;width:11.49px;height:3.10px;background:#fff;"></div>
<div class="a" style="left:131.34px;top:846.00px;width:11.49px;height:3.10px;background:#fff;"></div>
<div class="a" style="left:142.83px;top:846.00px;width:11.49px;height:3.10px;background:#dedede;"></div>
<div class="a" style="left:154.32px;top:846.00px;width:11.49px;height:3.10px;background:#fff;"></div>
<div class="a" style="left:165.81px;top:846.00px;width:11.49px;height:3.10px;background:#dedede;"></div>
<svg class="a" style="left:62.4px;top:804.5px" width="114.9" height="45" viewBox="0 0 114.9 45"><line x1="11.49" y1="3.9" x2="11.49" y2="44.6" stroke="#8a8a8a" stroke-width=".5"/><line x1="22.98" y1="3.9" x2="22.98" y2="44.6" stroke="#8a8a8a" stroke-width=".5"/><line x1="34.47" y1="3.9" x2="34.47" y2="44.6" stroke="#8a8a8a" stroke-width=".5"/><line x1="45.96" y1="3.9" x2="45.96" y2="44.6" stroke="#8a8a8a" stroke-width=".5"/><line x1="57.45" y1="3.9" x2="57.45" y2="44.6" stroke="#8a8a8a" stroke-width=".5"/><line x1="68.94" y1="3.9" x2="68.94" y2="44.6" stroke="#8a8a8a" stroke-width=".5"/><line x1="80.43" y1="3.9" x2="80.43" y2="44.6" stroke="#8a8a8a" stroke-width=".5"/><line x1="91.92" y1="3.9" x2="91.92" y2="44.6" stroke="#8a8a8a" stroke-width=".5"/><line x1="103.41" y1="3.9" x2="103.41" y2="44.6" stroke="#8a8a8a" stroke-width=".5"/><line x1="0" y1="10.50" x2="114.9" y2="10.50" stroke="#a0a0a0" stroke-width=".45"/><line x1="0" y1="13.60" x2="114.9" y2="13.60" stroke="#a0a0a0" stroke-width=".45"/><line x1="0" y1="16.70" x2="114.9" y2="16.70" stroke="#a0a0a0" stroke-width=".45"/><line x1="0" y1="19.80" x2="114.9" y2="19.80" stroke="#a0a0a0" stroke-width=".45"/><line x1="0" y1="22.90" x2="114.9" y2="22.90" stroke="#a0a0a0" stroke-width=".45"/><line x1="0" y1="26.00" x2="114.9" y2="26.00" stroke="#a0a0a0" stroke-width=".45"/><line x1="0" y1="29.10" x2="114.9" y2="29.10" stroke="#a0a0a0" stroke-width=".45"/><line x1="0" y1="32.20" x2="114.9" y2="32.20" stroke="#a0a0a0" stroke-width=".45"/><line x1="0" y1="35.30" x2="114.9" y2="35.30" stroke="#a0a0a0" stroke-width=".45"/><line x1="0" y1="38.40" x2="114.9" y2="38.40" stroke="#a0a0a0" stroke-width=".45"/><line x1="0" y1="41.50" x2="114.9" y2="41.50" stroke="#a0a0a0" stroke-width=".45"/><line x1="0" y1="44.60" x2="114.9" y2="44.60" stroke="#a0a0a0" stroke-width=".45"/><line x1="0" y1="3.9" x2="114.9" y2="3.9" stroke="#999" stroke-width=".35"/><rect x="48.45" y="1.4" width="18" height="1.3" fill="rgba(0,0,0,.35)"/><rect x="2.25" y="6.5" width="7" height="1.4" fill="rgba(0,0,0,.2)"/><rect x="13.73" y="6.5" width="7" height="1.4" fill="rgba(0,0,0,.2)"/><rect x="25.23" y="6.5" width="7" height="1.4" fill="rgba(0,0,0,.2)"/><rect x="36.71" y="6.5" width="7" height="1.4" fill="rgba(0,0,0,.2)"/><rect x="48.20" y="6.5" width="7" height="1.4" fill="rgba(0,0,0,.2)"/><rect x="59.70" y="6.5" width="7" height="1.4" fill="rgba(0,0,0,.2)"/><rect x="71.19" y="6.5" width="7" height="1.4" fill="rgba(0,0,0,.2)"/><rect x="82.68" y="6.5" width="7" height="1.4" fill="rgba(0,0,0,.2)"/><rect x="94.17" y="6.5" width="7" height="1.4" fill="rgba(0,0,0,.2)"/><rect x="105.66" y="6.5" width="7" height="1.4" fill="rgba(0,0,0,.2)"/><rect x="35.27" y="11.50" width="4.5" height="1.1" fill="rgba(0,0,0,.22)"/><rect x="92.72" y="11.50" width="4.5" height="1.1" fill="rgba(0,0,0,.22)"/><rect x="0.80" y="14.60" width="4.5" height="1.1" fill="rgba(0,0,0,.22)"/><rect x="12.29" y="14.60" width="3.2" height="1.1" fill="rgba(0,0,0,.22)"/><rect x="23.78" y="14.60" width="3.2" height="1.1" fill="rgba(0,0,0,.22)"/><rect x="69.74" y="14.60" width="4.5" height="1.1" fill="rgba(0,0,0,.22)"/><rect x="81.23" y="14.60" width="4.5" height="1.1" fill="rgba(0,0,0,.22)"/><rect x="92.72" y="14.60" width="4.5" height="1.1" fill="rgba(0,0,0,.22)"/><rect x="104.21" y="14.60" width="4.5" height="1.1" fill="rgba(0,0,0,.22)"/><rect x="0.80" y="17.70" width="4.5" height="1.1" fill="rgba(0,0,0,.22)"/><rect x="12.29" y="17.70" width="3.2" height="1.1" fill="rgba(0,0,0,.22)"/><rect x="23.78" y="17.70" width="3.2" height="1.1" fill="rgba(0,0,0,.22)"/><rect x="69.74" y="17.70" width="4.5" height="1.1" fill="rgba(0,0,0,.22)"/><rect x="81.23" y="17.70" width="4.5" height="1.1" fill="rgba(0,0,0,.22)"/><rect x="92.72" y="17.70" width="4.5" height="1.1" fill="rgba(0,0,0,.22)"/><rect x="104.21" y="17.70" width="4.5" height="1.1" fill="rgba(0,0,0,.22)"/><rect x="0.80" y="20.80" width="4.5" height="1.1" fill="rgba(0,0,0,.22)"/><rect x="12.29" y="20.80" width="3.2" height="1.1" fill="rgba(0,0,0,.22)"/><rect x="23.78" y="20.80" width="3.2" height="1.1" fill="rgba(0,0,0,.22)"/><rect x="69.74" y="20.80" width="4.5" height="1.1" fill="rgba(0,0,0,.22)"/><rect x="81.23" y="20.80" width="4.5" height="1.1" fill="rgba(0,0,0,.22)"/><rect x="92.72" y="20.80" width="4.5" height="1.1" fill="rgba(0,0,0,.22)"/><rect x="104.21" y="20.80" width="4.5" height="1.1" fill="rgba(0,0,0,.22)"/><rect x="0.80" y="23.90" width="4.5" height="1.1" fill="rgba(0,0,0,.22)"/><rect x="12.29" y="23.90" width="3.2" height="1.1" fill="rgba(0,0,0,.22)"/><rect x="23.78" y="23.90" width="3.2" height="1.1" fill="rgba(0,0,0,.22)"/><rect x="69.74" y="23.90" width="4.5" height="1.1" fill="rgba(0,0,0,.22)"/><rect x="81.23" y="23.90" width="4.5" height="1.1" fill="rgba(0,0,0,.22)"/><rect x="92.72" y="23.90" width="4.5" height="1.1" fill="rgba(0,0,0,.22)"/><rect x="104.21" y="23.90" width="4.5" height="1.1" fill="rgba(0,0,0,.22)"/><rect x="0.80" y="27.00" width="4.5" height="1.1" fill="rgba(0,0,0,.22)"/><rect x="12.29" y="27.00" width="3.2" height="1.1" fill="rgba(0,0,0,.22)"/><rect x="35.27" y="27.00" width="4.5" height="1.1" fill="rgba(0,0,0,.22)"/><rect x="58.25" y="27.00" width="4.5" height="1.1" fill="rgba(0,0,0,.22)"/><rect x="69.74" y="27.00" width="4.5" height="1.1" fill="rgba(0,0,0,.22)"/><rect x="92.72" y="27.00" width="4.5" height="1.1" fill="rgba(0,0,0,.22)"/><rect x="0.80" y="30.10" width="4.5" height="1.1" fill="rgba(0,0,0,.22)"/><rect x="12.29" y="30.10" width="3.2" height="1.1" fill="rgba(0,0,0,.22)"/><rect x="35.27" y="30.10" width="4.5" height="1.1" fill="rgba(0,0,0,.22)"/><rect x="58.25" y="30.10" width="4.5" height="1.1" fill="rgba(0,0,0,.22)"/><rect x="69.74" y="30.10" width="4.5" height="1.1" fill="rgba(0,0,0,.22)"/><rect x="92.72" y="30.10" width="4.5" height="1.1" fill="rgba(0,0,0,.22)"/><rect x="0.80" y="33.20" width="4.5" height="1.1" fill="rgba(0,0,0,.22)"/><rect x="12.29" y="33.20" width="3.2" height="1.1" fill="rgba(0,0,0,.22)"/><rect x="35.27" y="33.20" width="4.5" height="1.1" fill="rgba(0,0,0,.22)"/><rect x="58.25" y="33.20" width="4.5" height="1.1" fill="rgba(0,0,0,.22)"/><rect x="69.74" y="33.20" width="4.5" height="1.1" fill="rgba(0,0,0,.22)"/><rect x="92.72" y="33.20" width="4.5" height="1.1" fill="rgba(0,0,0,.22)"/><rect x="0.80" y="36.30" width="4.5" height="1.1" fill="rgba(0,0,0,.22)"/><rect x="12.29" y="36.30" width="3.2" height="1.1" fill="rgba(0,0,0,.22)"/><rect x="35.27" y="36.30" width="4.5" height="1.1" fill="rgba(0,0,0,.22)"/><rect x="58.25" y="36.30" width="4.5" height="1.1" fill="rgba(0,0,0,.22)"/><rect x="69.74" y="36.30" width="4.5" height="1.1" fill="rgba(0,0,0,.22)"/><rect x="92.72" y="36.30" width="4.5" height="1.1" fill="rgba(0,0,0,.22)"/><rect x="0.80" y="39.40" width="4.5" height="1.1" fill="rgba(0,0,0,.22)"/><rect x="12.29" y="39.40" width="3.2" height="1.1" fill="rgba(0,0,0,.22)"/><rect x="35.27" y="39.40" width="4.5" height="1.1" fill="rgba(0,0,0,.22)"/><rect x="58.25" y="39.40" width="4.5" height="1.1" fill="rgba(0,0,0,.22)"/><rect x="69.74" y="39.40" width="4.5" height="1.1" fill="rgba(0,0,0,.22)"/><rect x="92.72" y="39.40" width="4.5" height="1.1" fill="rgba(0,0,0,.22)"/><rect x="0.80" y="42.50" width="4.5" height="1.1" fill="rgba(0,0,0,.22)"/><rect x="12.29" y="42.50" width="3.2" height="1.1" fill="rgba(0,0,0,.22)"/><rect x="35.27" y="42.50" width="4.5" height="1.1" fill="rgba(0,0,0,.22)"/><rect x="58.25" y="42.50" width="4.5" height="1.1" fill="rgba(0,0,0,.22)"/><rect x="69.74" y="42.50" width="4.5" height="1.1" fill="rgba(0,0,0,.22)"/><rect x="92.72" y="42.50" width="4.5" height="1.1" fill="rgba(0,0,0,.22)"/></svg>
<div class="a" style="left:62.40px;top:854.30px;width:114.90px;height:10.50px;background:#b3b3b3;"></div>
<div class="a" style="left:62.40px;top:864.80px;width:11.49px;height:3.10px;background:#fff;"></div>
<div class="a" style="left:73.89px;top:864.80px;width:11.49px;height:3.10px;background:#fff;"></div>
<div class="a" style="left:85.38px;top:864.80px;width:11.49px;height:3.10px;background:#fff;"></div>
<div class="a" style="left:96.87px;top:864.80px;width:11.49px;height:3.10px;background:#fff;"></div>
<div class="a" style="left:108.36px;top:864.80px;width:11.49px;height:3.10px;background:#fff;"></div>
<div class="a" style="left:119.85px;top:864.80px;width:11.49px;height:3.10px;background:#fff;"></div>
<div class="a" style="left:131.34px;top:864.80px;width:11.49px;height:3.10px;background:#fff;"></div>
<div class="a" style="left:142.83px;top:864.80px;width:11.49px;height:3.10px;background:#fff;"></div>
<div class="a" style="left:154.32px;top:864.80px;width:11.49px;height:3.10px;background:#fff;"></div>
<div class="a" style="left:165.81px;top:864.80px;width:11.49px;height:3.10px;background:#fff;"></div>
<div class="a" style="left:62.40px;top:867.90px;width:11.49px;height:3.10px;background:#fcd878;"></div>
<div class="a" style="left:73.89px;top:867.90px;width:11.49px;height:3.10px;background:#fff;"></div>
<div class="a" style="left:85.38px;top:867.90px;width:11.49px;height:3.10px;background:#fff;"></div>
<div class="a" style="left:96.87px;top:867.90px;width:11.49px;height:3.10px;background:#fff;"></div>
<div class="a" style="left:108.36px;top:867.90px;width:11.49px;height:3.10px;background:#fff;"></div>
<div class="a" style="left:119.85px;top:867.90px;width:11.49px;height:3.10px;background:#fff;"></div>
<div class="a" style="left:131.34px;top:867.90px;width:11.49px;height:3.10px;background:#fff;"></div>
<div class="a" style="left:142.83px;top:867.90px;width:11.49px;height:3.10px;background:#dedede;"></div>
<div class="a" style="left:154.32px;top:867.90px;width:11.49px;height:3.10px;background:#fff;"></div>
<div class="a" style="left:165.81px;top:867.90px;width:11.49px;height:3.10px;background:#dedede;"></div>
<div class="a" style="left:62.40px;top:871.00px;width:11.49px;height:3.10px;background:#fcd878;"></div>
<div class="a" style="left:73.89px;top:871.00px;width:11.49px;height:3.10px;background:#fff;"></div>
<div class="a" style="left:85.38px;top:871.00px;width:11.49px;height:3.10px;background:#fff;"></div>
<div class="a" style="left:96.87px;top:871.00px;width:11.49px;height:3.10px;background:#fff;"></div>
<div class="a" style="left:108.36px;top:871.00px;width:11.49px;height:3.10px;background:#fff;"></div>
<div class="a" style="left:119.85px;top:871.00px;width:11.49px;height:3.10px;background:#fff;"></div>
<div class="a" style="left:131.34px;top:871.00px;width:11.49px;height:3.10px;background:#fff;"></div>
<div class="a" style="left:142.83px;top:871.00px;width:11.49px;height:3.10px;background:#dedede;"></div>
<div class="a" style="left:154.32px;top:871.00px;width:11.49px;height:3.10px;background:#fff;"></div>
<div class="a" style="left:165.81px;top:871.00px;width:11.49px;height:3.10px;background:#dedede;"></div>
<div class="a" style="left:62.40px;top:874.10px;width:11.49px;height:3.10px;background:#fcd878;"></div>
<div class="a" style="left:73.89px;top:874.10px;width:11.49px;height:3.10px;background:#fff;"></div>
<div class="a" style="left:85.38px;top:874.10px;width:11.49px;height:3.10px;background:#fff;"></div>
<div class="a" style="left:96.87px;top:874.10px;width:11.49px;height:3.10px;background:#fff;"></div>
<div class="a" style="left:108.36px;top:874.10px;width:11.49px;height:3.10px;background:#fff;"></div>
<div class="a" style="left:119.85px;top:874.10px;width:11.49px;height:3.10px;background:#fff;"></div>
<div class="a" style="left:131.34px;top:874.10px;width:11.49px;height:3.10px;background:#fff;"></div>
<div class="a" style="left:142.83px;top:874.10px;width:11.49px;height:3.10px;background:#dedede;"></div>
<div class="a" style="left:154.32px;top:874.10px;width:11.49px;height:3.10px;background:#fff;"></div>
<div class="a" style="left:165.81px;top:874.10px;width:11.49px;height:3.10px;background:#dedede;"></div>
<div class="a" style="left:62.40px;top:877.20px;width:11.49px;height:3.10px;background:#fcd878;"></div>
<div class="a" style="left:73.89px;top:877.20px;width:11.49px;height:3.10px;background:#fff;"></div>
<div class="a" style="left:85.38px;top:877.20px;width:11.49px;height:3.10px;background:#fff;"></div>
<div class="a" style="left:96.87px;top:877.20px;width:11.49px;height:3.10px;background:#fff;"></div>
<div class="a" style="left:108.36px;top:877.20px;width:11.49px;height:3.10px;background:#fff;"></div>
<div class="a" style="left:119.85px;top:877.20px;width:11.49px;height:3.10px;background:#fff;"></div>
<div class="a" style="left:131.34px;top:877.20px;width:11.49px;height:3.10px;background:#fff;"></div>
<div class="a" style="left:142.83px;top:877.20px;width:11.49px;height:3.10px;background:#dedede;"></div>
<div class="a" style="left:154.32px;top:877.20px;width:11.49px;height:3.10px;background:#fff;"></div>
<div class="a" style="left:165.81px;top:877.20px;width:11.49px;height:3.10px;background:#dedede;"></div>
<div class="a" style="left:62.40px;top:880.30px;width:11.49px;height:3.10px;background:#fcd878;"></div>
<div class="a" style="left:73.89px;top:880.30px;width:11.49px;height:3.10px;background:#fff;"></div>
<div class="a" style="left:85.38px;top:880.30px;width:11.49px;height:3.10px;background:#fff;"></div>
<div class="a" style="left:96.87px;top:880.30px;width:11.49px;height:3.10px;background:#fff;"></div>
<div class="a" style="left:108.36px;top:880.30px;width:11.49px;height:3.10px;background:#fff;"></div>
<div class="a" style="left:119.85px;top:880.30px;width:11.49px;height:3.10px;background:#fff;"></div>
<div class="a" style="left:131.34px;top:880.30px;width:11.49px;height:3.10px;background:#fff;"></div>
<div class="a" style="left:142.83px;top:880.30px;width:11.49px;height:3.10px;background:#dedede;"></div>
<div class="a" style="left:154.32px;top:880.30px;width:11.49px;height:3.10px;background:#fcd878;"></div>
<div class="a" style="left:165.81px;top:880.30px;width:11.49px;height:3.10px;background:#dedede;"></div>
<div class="a" style="left:62.40px;top:883.40px;width:11.49px;height:3.10px;background:#fcd878;"></div>
<div class="a" style="left:73.89px;top:883.40px;width:11.49px;height:3.10px;background:#fff;"></div>
<div class="a" style="left:85.38px;top:883.40px;width:11.49px;height:3.10px;background:#fff;"></div>
<div class="a" style="left:96.87px;top:883.40px;width:11.49px;height:3.10px;background:#fff;"></div>
<div class="a" style="left:108.36px;top:883.40px;width:11.49px;height:3.10px;background:#fff;"></div>
<div class="a" style="left:119.85px;top:883.40px;width:11.49px;height:3.10px;background:#fff;"></div>
<div class="a" style="left:131.34px;top:883.40px;width:11.49px;height:3.10px;background:#fff;"></div>
<div class="a" style="left:142.83px;top:883.40px;width:11.49px;height:3.10px;background:#dedede;"></div>
<div class="a" style="left:154.32px;top:883.40px;width:11.49px;height:3.10px;background:#fcd878;"></div>
<div class="a" style="left:165.81px;top:883.40px;width:11.49px;height:3.10px;background:#dedede;"></div>
<div class="a" style="left:62.40px;top:886.50px;width:11.49px;height:3.10px;background:#fcd878;"></div>
<div class="a" style="left:73.89px;top:886.50px;width:11.49px;height:3.10px;background:#fff;"></div>
<div class="a" style="left:85.38px;top:886.50px;width:11.49px;height:3.10px;background:#fff;"></div>
<div class="a" style="left:96.87px;top:886.50px;width:11.49px;height:3.10px;background:#fff;"></div>
<div class="a" style="left:108.36px;top:886.50px;width:11.49px;height:3.10px;background:#fff;"></div>
<div class="a" style="left:119.85px;top:886.50px;width:11.49px;height:3.10px;background:#fff;"></div>
<div class="a" style="left:131.34px;top:886.50px;width:11.49px;height:3.10px;background:#fff;"></div>
<div class="a" style="left:142.83px;top:886.50px;width:11.49px;height:3.10px;background:#dedede;"></div>
<div class="a" style="left:154.32px;top:886.50px;width:11.49px;height:3.10px;background:#fcd878;"></div>
<div class="a" style="left:165.81px;top:886.50px;width:11.49px;height:3.10px;background:#dedede;"></div>
<div class="a" style="left:62.40px;top:889.60px;width:11.49px;height:3.10px;background:#e3e3e3;"></div>
<div class="a" style="left:73.89px;top:889.60px;width:11.49px;height:3.10px;background:#fff;"></div>
<div class="a" style="left:85.38px;top:889.60px;width:11.49px;height:3.10px;background:#fff;"></div>
<div class="a" style="left:96.87px;top:889.60px;width:11.49px;height:3.10px;background:#fff;"></div>
<div class="a" style="left:108.36px;top:889.60px;width:11.49px;height:3.10px;background:#fff;"></div>
<div class="a" style="left:119.85px;top:889.60px;width:11.49px;height:3.10px;background:#fff;"></div>
<div class="a" style="left:131.34px;top:889.60px;width:11.49px;height:3.10px;background:#fff;"></div>
<div class="a" style="left:142.83px;top:889.60px;width:11.49px;height:3.10px;background:#dedede;"></div>
<div class="a" style="left:154.32px;top:889.60px;width:11.49px;height:3.10px;background:#fcd878;"></div>
<div class="a" style="left:165.81px;top:889.60px;width:11.49px;height:3.10px;background:#dedede;"></div>
<div class="a" style="left:62.40px;top:892.70px;width:11.49px;height:3.10px;background:#e3e3e3;"></div>
<div class="a" style="left:73.89px;top:892.70px;width:11.49px;height:3.10px;background:#fff;"></div>
<div class="a" style="left:85.38px;top:892.70px;width:11.49px;height:3.10px;background:#fff;"></div>
<div class="a" style="left:96.87px;top:892.70px;width:11.49px;height:3.10px;background:#fff;"></div>
<div class="a" style="left:108.36px;top:892.70px;width:11.49px;height:3.10px;background:#fff;"></div>
<div class="a" style="left:119.85px;top:892.70px;width:11.49px;height:3.10px;background:#fff;"></div>
<div class="a" style="left:131.34px;top:892.70px;width:11.49px;height:3.10px;background:#fff;"></div>
<div class="a" style="left:142.83px;top:892.70px;width:11.49px;height:3.10px;background:#dedede;"></div>
<div class="a" style="left:154.32px;top:892.70px;width:11.49px;height:3.10px;background:#fff;"></div>
<div class="a" style="left:165.81px;top:892.70px;width:11.49px;height:3.10px;background:#dedede;"></div>
<div class="a" style="left:62.40px;top:895.80px;width:11.49px;height:3.10px;background:#e3e3e3;"></div>
<div class="a" style="left:73.89px;top:895.80px;width:11.49px;height:3.10px;background:#fff;"></div>
<div class="a" style="left:85.38px;top:895.80px;width:11.49px;height:3.10px;background:#fff;"></div>
<div class="a" style="left:96.87px;top:895.80px;width:11.49px;height:3.10px;background:#fff;"></div>
<div class="a" style="left:108.36px;top:895.80px;width:11.49px;height:3.10px;background:#fff;"></div>
<div class="a" style="left:119.85px;top:895.80px;width:11.49px;height:3.10px;background:#fff;"></div>
<div class="a" style="left:131.34px;top:895.80px;width:11.49px;height:3.10px;background:#fff;"></div>
<div class="a" style="left:142.83px;top:895.80px;width:11.49px;height:3.10px;background:#dedede;"></div>
<div class="a" style="left:154.32px;top:895.80px;width:11.49px;height:3.10px;background:#fff;"></div>
<div class="a" style="left:165.81px;top:895.80px;width:11.49px;height:3.10px;background:#dedede;"></div>
<svg class="a" style="left:62.4px;top:854.3px" width="114.9" height="45" viewBox="0 0 114.9 45"><line x1="11.49" y1="3.9" x2="11.49" y2="44.6" stroke="#8a8a8a" stroke-width=".5"/><line x1="22.98" y1="3.9" x2="22.98" y2="44.6" stroke="#8a8a8a" stroke-width=".5"/><line x1="34.47" y1="3.9" x2="34.47" y2="44.6" stroke="#8a8a8a" stroke-width=".5"/><line x1="45.96" y1="3.9" x2="45.96" y2="44.6" stroke="#8a8a8a" stroke-width=".5"/><line x1="57.45" y1="3.9" x2="57.45" y2="44.6" stroke="#8a8a8a" stroke-width=".5"/><line x1="68.94" y1="3.9" x2="68.94" y2="44.6" stroke="#8a8a8a" stroke-width=".5"/><line x1="80.43" y1="3.9" x2="80.43" y2="44.6" stroke="#8a8a8a" stroke-width=".5"/><line x1="91.92" y1="3.9" x2="91.92" y2="44.6" stroke="#8a8a8a" stroke-width=".5"/><line x1="103.41" y1="3.9" x2="103.41" y2="44.6" stroke="#8a8a8a" stroke-width=".5"/><line x1="0" y1="10.50" x2="114.9" y2="10.50" stroke="#a0a0a0" stroke-width=".45"/><line x1="0" y1="13.60" x2="114.9" y2="13.60" stroke="#a0a0a0" stroke-width=".45"/><line x1="0" y1="16.70" x2="114.9" y2="16.70" stroke="#a0a0a0" stroke-width=".45"/><line x1="0" y1="19.80" x2="114.9" y2="19.80" stroke="#a0a0a0" stroke-width=".45"/><line x1="0" y1="22.90" x2="114.9" y2="22.90" stroke="#a0a0a0" stroke-width=".45"/><line x1="0" y1="26.00" x2="114.9" y2="26.00" stroke="#a0a0a0" stroke-width=".45"/><line x1="0" y1="29.10" x2="114.9" y2="29.10" stroke="#a0a0a0" stroke-width=".45"/><line x1="0" y1="32.20" x2="114.9" y2="32.20" stroke="#a0a0a0" stroke-width=".45"/><line x1="0" y1="35.30" x2="114.9" y2="35.30" stroke="#a0a0a0" stroke-width=".45"/><line x1="0" y1="38.40" x2="114.9" y2="38.40" stroke="#a0a0a0" stroke-width=".45"/><line x1="0" y1="41.50" x2="114.9" y2="41.50" stroke="#a0a0a0" stroke-width=".45"/><line x1="0" y1="44.60" x2="114.9" y2="44.60" stroke="#a0a0a0" stroke-width=".45"/><line x1="0" y1="3.9" x2="114.9" y2="3.9" stroke="#999" stroke-width=".35"/><rect x="48.45" y="1.4" width="18" height="1.3" fill="rgba(0,0,0,.35)"/><rect x="2.25" y="6.5" width="7" height="1.4" fill="rgba(0,0,0,.2)"/><rect x="13.73" y="6.5" width="7" height="1.4" fill="rgba(0,0,0,.2)"/><rect x="25.23" y="6.5" width="7" height="1.4" fill="rgba(0,0,0,.2)"/><rect x="36.71" y="6.5" width="7" height="1.4" fill="rgba(0,0,0,.2)"/><rect x="48.20" y="6.5" width="7" height="1.4" fill="rgba(0,0,0,.2)"/><rect x="59.70" y="6.5" width="7" height="1.4" fill="rgba(0,0,0,.2)"/><rect x="71.19" y="6.5" width="7" height="1.4" fill="rgba(0,0,0,.2)"/><rect x="82.68" y="6.5" width="7" height="1.4" fill="rgba(0,0,0,.2)"/><rect x="94.17" y="6.5" width="7" height="1.4" fill="rgba(0,0,0,.2)"/><rect x="105.66" y="6.5" width="7" height="1.4" fill="rgba(0,0,0,.2)"/><rect x="35.27" y="11.50" width="4.5" height="1.1" fill="rgba(0,0,0,.22)"/><rect x="92.72" y="11.50" width="4.5" height="1.1" fill="rgba(0,0,0,.22)"/><rect x="0.80" y="14.60" width="4.5" height="1.1" fill="rgba(0,0,0,.22)"/><rect x="12.29" y="14.60" width="3.2" height="1.1" fill="rgba(0,0,0,.22)"/><rect x="23.78" y="14.60" width="3.2" height="1.1" fill="rgba(0,0,0,.22)"/><rect x="69.74" y="14.60" width="4.5" height="1.1" fill="rgba(0,0,0,.22)"/><rect x="81.23" y="14.60" width="4.5" height="1.1" fill="rgba(0,0,0,.22)"/><rect x="92.72" y="14.60" width="4.5" height="1.1" fill="rgba(0,0,0,.22)"/><rect x="104.21" y="14.60" width="4.5" height="1.1" fill="rgba(0,0,0,.22)"/><rect x="0.80" y="17.70" width="4.5" height="1.1" fill="rgba(0,0,0,.22)"/><rect x="12.29" y="17.70" width="3.2" height="1.1" fill="rgba(0,0,0,.22)"/><rect x="23.78" y="17.70" width="3.2" height="1.1" fill="rgba(0,0,0,.22)"/><rect x="69.74" y="17.70" width="4.5" height="1.1" fill="rgba(0,0,0,.22)"/><rect x="81.23" y="17.70" width="4.5" height="1.1" fill="rgba(0,0,0,.22)"/><rect x="92.72" y="17.70" width="4.5" height="1.1" fill="rgba(0,0,0,.22)"/><rect x="104.21" y="17.70" width="4.5" height="1.1" fill="rgba(0,0,0,.22)"/><rect x="0.80" y="20.80" width="4.5" height="1.1" fill="rgba(0,0,0,.22)"/><rect x="12.29" y="20.80" width="3.2" height="1.1" fill="rgba(0,0,0,.22)"/><rect x="23.78" y="20.80" width="3.2" height="1.1" fill="rgba(0,0,0,.22)"/><rect x="69.74" y="20.80" width="4.5" height="1.1" fill="rgba(0,0,0,.22)"/><rect x="81.23" y="20.80" width="4.5" height="1.1" fill="rgba(0,0,0,.22)"/><rect x="92.72" y="20.80" width="4.5" height="1.1" fill="rgba(0,0,0,.22)"/><rect x="104.21" y="20.80" width="4.5" height="1.1" fill="rgba(0,0,0,.22)"/><rect x="0.80" y="23.90" width="4.5" height="1.1" fill="rgba(0,0,0,.22)"/><rect x="12.29" y="23.90" width="3.2" height="1.1" fill="rgba(0,0,0,.22)"/><rect x="23.78" y="23.90" width="3.2" height="1.1" fill="rgba(0,0,0,.22)"/><rect x="69.74" y="23.90" width="4.5" height="1.1" fill="rgba(0,0,0,.22)"/><rect x="81.23" y="23.90" width="4.5" height="1.1" fill="rgba(0,0,0,.22)"/><rect x="92.72" y="23.90" width="4.5" height="1.1" fill="rgba(0,0,0,.22)"/><rect x="104.21" y="23.90" width="4.5" height="1.1" fill="rgba(0,0,0,.22)"/><rect x="0.80" y="27.00" width="4.5" height="1.1" fill="rgba(0,0,0,.22)"/><rect x="12.29" y="27.00" width="3.2" height="1.1" fill="rgba(0,0,0,.22)"/><rect x="35.27" y="27.00" width="4.5" height="1.1" fill="rgba(0,0,0,.22)"/><rect x="58.25" y="27.00" width="4.5" height="1.1" fill="rgba(0,0,0,.22)"/><rect x="69.74" y="27.00" width="4.5" height="1.1" fill="rgba(0,0,0,.22)"/><rect x="92.72" y="27.00" width="4.5" height="1.1" fill="rgba(0,0,0,.22)"/><rect x="0.80" y="30.10" width="4.5" height="1.1" fill="rgba(0,0,0,.22)"/><rect x="12.29" y="30.10" width="3.2" height="1.1" fill="rgba(0,0,0,.22)"/><rect x="35.27" y="30.10" width="4.5" height="1.1" fill="rgba(0,0,0,.22)"/><rect x="58.25" y="30.10" width="4.5" height="1.1" fill="rgba(0,0,0,.22)"/><rect x="69.74" y="30.10" width="4.5" height="1.1" fill="rgba(0,0,0,.22)"/><rect x="92.72" y="30.10" width="4.5" height="1.1" fill="rgba(0,0,0,.22)"/><rect x="0.80" y="33.20" width="4.5" height="1.1" fill="rgba(0,0,0,.22)"/><rect x="12.29" y="33.20" width="3.2" height="1.1" fill="rgba(0,0,0,.22)"/><rect x="35.27" y="33.20" width="4.5" height="1.1" fill="rgba(0,0,0,.22)"/><rect x="58.25" y="33.20" width="4.5" height="1.1" fill="rgba(0,0,0,.22)"/><rect x="69.74" y="33.20" width="4.5" height="1.1" fill="rgba(0,0,0,.22)"/><rect x="92.72" y="33.20" width="4.5" height="1.1" fill="rgba(0,0,0,.22)"/><rect x="0.80" y="36.30" width="4.5" height="1.1" fill="rgba(0,0,0,.22)"/><rect x="12.29" y="36.30" width="3.2" height="1.1" fill="rgba(0,0,0,.22)"/><rect x="35.27" y="36.30" width="4.5" height="1.1" fill="rgba(0,0,0,.22)"/><rect x="58.25" y="36.30" width="4.5" height="1.1" fill="rgba(0,0,0,.22)"/><rect x="69.74" y="36.30" width="4.5" height="1.1" fill="rgba(0,0,0,.22)"/><rect x="92.72" y="36.30" width="4.5" height="1.1" fill="rgba(0,0,0,.22)"/><rect x="0.80" y="39.40" width="4.5" height="1.1" fill="rgba(0,0,0,.22)"/><rect x="12.29" y="39.40" width="3.2" height="1.1" fill="rgba(0,0,0,.22)"/><rect x="35.27" y="39.40" width="4.5" height="1.1" fill="rgba(0,0,0,.22)"/><rect x="58.25" y="39.40" width="4.5" height="1.1" fill="rgba(0,0,0,.22)"/><rect x="69.74" y="39.40" width="4.5" height="1.1" fill="rgba(0,0,0,.22)"/><rect x="92.72" y="39.40" width="4.5" height="1.1" fill="rgba(0,0,0,.22)"/><rect x="0.80" y="42.50" width="4.5" height="1.1" fill="rgba(0,0,0,.22)"/><rect x="12.29" y="42.50" width="3.2" height="1.1" fill="rgba(0,0,0,.22)"/><rect x="35.27" y="42.50" width="4.5" height="1.1" fill="rgba(0,0,0,.22)"/><rect x="58.25" y="42.50" width="4.5" height="1.1" fill="rgba(0,0,0,.22)"/><rect x="69.74" y="42.50" width="4.5" height="1.1" fill="rgba(0,0,0,.22)"/><rect x="92.72" y="42.50" width="4.5" height="1.1" fill="rgba(0,0,0,.22)"/></svg>
<div class="a" style="left:89.90px;top:800.50px;width:60.30px;height:11.80px;background:#f4994a;"></div>
<div class="t serif" style="left:89.9px;width:60.3px;text-align:center;top:802.7px;font-size:6.5px;color:#6a5848">3</div>
<!--/THUMBS-->
<!-- main -->
<div id="main" class="a"></div>

<!-- pages shadows -->
<div class="a" style="left:304px;top:61px;width:11px;height:1055px;background:linear-gradient(to right,rgba(235,239,250,0),rgba(140,143,155,.55) 70%,rgba(120,123,135,.75))"></div>
<div class="a" style="left:1405px;top:61px;width:11px;height:1055px;background:linear-gradient(to left,rgba(235,239,250,0),rgba(140,143,155,.55) 70%,rgba(120,123,135,.75))"></div>
<div class="a" style="left:315px;top:678px;width:1090px;height:14px;background:linear-gradient(to bottom,#93959f 0,#a8abb4 2px,#b1b4bd 5px,#b1b4bd 9px,#a8abb4 12px,#93959f 14px)"></div>
<div class="a" style="left:300px;top:674px;width:16px;height:22px;background:radial-gradient(ellipse 10px 8px at 15% 50%, rgba(235,239,250,1) 25%, rgba(235,239,250,0) 100%)"></div>
<div class="a" style="left:1404px;top:674px;width:16px;height:22px;background:radial-gradient(ellipse 10px 8px at 85% 50%, rgba(235,239,250,1) 25%, rgba(235,239,250,0) 100%)"></div>
<div class="page" style="left:315px;top:61px;width:1090px;height:617px"></div>
<div class="page" style="left:315px;top:692px;width:1090px;height:424px"></div>
<!--DOC1-->
<div class="a" style="left:323px;top:61px;width:1065px;height:59px;background:#fde8a8"></div>
<div class="a" style="left:436px;top:61px;width:14px;height:4px;overflow:hidden"><div class="a" style="left:2px;top:-5.6px;width:9px;height:7.5px;border-bottom:2.2px solid #000;border-radius:0 0 4.5px 4.5px"></div></div>
<div class="a" style="left:714px;top:71px;width:257px;height:33px;background:#fff"></div>
<div class="t" style="left:357px;top:71.96px;font-size:15.05px;">Innbetalt til konto</div>
<div class="t" style="left:904px;top:78.24px;font-size:18.5px;">452.12</div>
<div class="t" style="left:359.5px;top:128.86px;font-size:15.05px;">Betalingsinformasjon</div>
<div class="t" style="left:880px;top:124.58px;font-size:22.7px;font-weight:700">GIRO</div>
<div class="t" style="left:1103px;top:129.06px;font-size:15.05px;">Due date</div>
<div class="t serif" style="left:1206px;top:126.78px;font-size:18.65px;">31.01.2019</div>
<div class="t" style="left:880px;top:156.39px;font-size:14.9px;">Underskrift ved girering</div>
<div class="t serif" style="left:393px;top:176.41px;font-size:18.5px;">Invoice</div>
<div class="t serif" style="left:525.5px;top:176.41px;font-size:18.5px;">12345</div>
<div class="t serif" style="left:393px;top:197.11px;font-size:18.5px;">Customer ID</div>
<div class="t serif" style="left:525.5px;top:197.11px;font-size:18.5px;">55</div>
<div class="t" style="left:365px;top:276.36px;font-size:15.05px;">Betalt av</div>
<div class="t" style="left:885.5px;top:276.36px;font-size:15.05px;">Betalt til</div>
<div class="t serif" style="left:391.5px;top:326.31px;font-size:18.5px;">Buyer Name AS æøå</div>
<div class="t serif" style="left:391.5px;top:347.81px;font-size:18.5px;">Buyer Street 321 æøå</div>
<div class="t serif" style="left:391.5px;top:369.61px;font-size:18.5px;">4321 City æøå</div>
<div class="t serif" style="left:923.5px;top:326.31px;font-size:18.5px;">Feature Test Name AS æøå</div>
<div class="t serif" style="left:923.5px;top:347.81px;font-size:18.5px;">Rule Street 123 æøå</div>
<div class="t serif" style="left:923.5px;top:369.61px;font-size:18.5px;">1234 City æøå, Country æøå</div>
<div class="t" style="left:337.5px;top:482.66px;font-size:15.05px;">Kundeidentifikasjon (KID)</div>
<div class="t" style="left:716.5px;top:482.66px;font-size:15.05px;">Kroner</div>
<div class="t" style="left:990px;top:482.66px;font-size:15.05px;">Til konto</div>
<div class="t" style="left:1203px;top:482.66px;font-size:15.05px;">Blankettnummer</div>
<div class="t" style="left:337.5px;top:528.54px;font-size:18.5px;">1234567895</div>
<div class="t" style="left:716.5px;top:528.54px;font-size:18.5px;">452.12</div>
<div class="t" style="left:931.5px;top:528.54px;font-size:18.5px;">1234.56.78901</div>
<svg class="a" style="left:1004px;top:628px" width="32" height="32" viewBox="1004 628 32 32" shape-rendering="crispEdges"><path d="M1012,634 H1018 V632 H1022 V634 H1028 V636 H1030 V638 H1032 V646 H1030 V650 H1028 V654 H1026 V656 H1012 V652 H1010 V650 H1008 V642 H1010 V640 H1012 Z" fill="#eef6fd"/><rect x="1012" y="632" width="4" height="2" fill="#000"/><rect x="1018" y="630" width="4" height="2" fill="#000"/><rect x="1022" y="632" width="6" height="2" fill="#000"/><rect x="1028" y="634" width="2" height="4" fill="#000"/><rect x="1030" y="636" width="2" height="2" fill="#000"/><rect x="1032" y="638" width="2" height="8" fill="#000"/><rect x="1030" y="646" width="2" height="4" fill="#000"/><rect x="1028" y="650" width="2" height="4" fill="#000"/><rect x="1026" y="654" width="2" height="2" fill="#000"/><rect x="1012" y="656" width="14" height="2" fill="#000"/><rect x="1010" y="652" width="2" height="4" fill="#000"/><rect x="1008" y="650" width="2" height="2" fill="#000"/><rect x="1006" y="642" width="2" height="8" fill="#000"/><rect x="1008" y="640" width="2" height="2" fill="#000"/><rect x="1010" y="634" width="2" height="6" fill="#000"/><rect x="1016" y="632" width="2" height="6" fill="#000"/><rect x="1022" y="632" width="2" height="8" fill="#000"/><rect x="1028" y="634" width="2" height="6" fill="#000"/><rect x="1012" y="644" width="2" height="2" fill="#000"/></svg>
<!--/DOC1-->
<!--DOC2-->
<div class="t" style="left:0;width:1722px;text-align:center;top:710.06px;font-size:14.8px;font-weight:700">Attachment page</div>
<div class="a" style="left:346.3px;top:742.5px;width:1009.9px;height:94.5px;background:#a6a6a6"></div>
<div class="a" style="left:346.3px;top:864.8px;width:100.9px;height:27.8px;background:#ffd966"></div>
<div class="a" style="left:1052.4px;top:864.8px;width:100.2px;height:27.8px;background:#dcdcdc"></div>
<div class="a" style="left:1253.2px;top:864.8px;width:102.0px;height:27.8px;background:#dcdcdc"></div>
<div class="a" style="left:346.3px;top:892.6px;width:100.9px;height:27.9px;background:#ffd966"></div>
<div class="a" style="left:1052.4px;top:892.6px;width:100.2px;height:27.9px;background:#dcdcdc"></div>
<div class="a" style="left:1253.2px;top:892.6px;width:102.0px;height:27.9px;background:#dcdcdc"></div>
<div class="a" style="left:346.3px;top:920.5px;width:100.9px;height:27.8px;background:#ffd966"></div>
<div class="a" style="left:1052.4px;top:920.5px;width:100.2px;height:27.8px;background:#dcdcdc"></div>
<div class="a" style="left:1253.2px;top:920.5px;width:102.0px;height:27.8px;background:#dcdcdc"></div>
<div class="a" style="left:346.3px;top:948.3px;width:100.9px;height:28.0px;background:#ffd966"></div>
<div class="a" style="left:1052.4px;top:948.3px;width:100.2px;height:28.0px;background:#dcdcdc"></div>
<div class="a" style="left:1253.2px;top:948.3px;width:102.0px;height:28.0px;background:#dcdcdc"></div>
<div class="a" style="left:346.3px;top:976.3px;width:100.9px;height:27.8px;background:#ffd966"></div>
<div class="a" style="left:1052.4px;top:976.3px;width:100.2px;height:27.8px;background:#dcdcdc"></div>
<div class="a" style="left:1152.6px;top:976.3px;width:100.6px;height:27.8px;background:#ffd966"></div>
<div class="a" style="left:1253.2px;top:976.3px;width:102.0px;height:27.8px;background:#dcdcdc"></div>
<div class="a" style="left:346.3px;top:1004.1px;width:100.9px;height:27.7px;background:#ffd966"></div>
<div class="a" style="left:1052.4px;top:1004.1px;width:100.2px;height:27.7px;background:#dcdcdc"></div>
<div class="a" style="left:1152.6px;top:1004.1px;width:100.6px;height:27.7px;background:#ffd966"></div>
<div class="a" style="left:1253.2px;top:1004.1px;width:102.0px;height:27.7px;background:#dcdcdc"></div>
<div class="a" style="left:346.3px;top:1031.8px;width:100.9px;height:27.8px;background:#ffd966"></div>
<div class="a" style="left:1052.4px;top:1031.8px;width:100.2px;height:27.8px;background:#dcdcdc"></div>
<div class="a" style="left:1152.6px;top:1031.8px;width:100.6px;height:27.8px;background:#ffd966"></div>
<div class="a" style="left:1253.2px;top:1031.8px;width:102.0px;height:27.8px;background:#dcdcdc"></div>
<div class="a" style="left:346.3px;top:1059.6px;width:100.9px;height:27.9px;background:#e5e5e5"></div>
<div class="a" style="left:1052.4px;top:1059.6px;width:100.2px;height:27.9px;background:#dcdcdc"></div>
<div class="a" style="left:1152.6px;top:1059.6px;width:100.6px;height:27.9px;background:#ffd966"></div>
<div class="a" style="left:1253.2px;top:1059.6px;width:102.0px;height:27.9px;background:#dcdcdc"></div>
<div class="a" style="left:346.3px;top:1087.5px;width:100.9px;height:27.8px;background:#e5e5e5"></div>
<div class="a" style="left:1052.4px;top:1087.5px;width:100.2px;height:27.8px;background:#dcdcdc"></div>
<div class="a" style="left:1253.2px;top:1087.5px;width:102.0px;height:27.8px;background:#dcdcdc"></div>
<div class="a" style="left:346.3px;top:742px;width:1009.9px;height:1px;background:#8e8e8e"></div>
<div class="a" style="left:346.3px;top:775px;width:1009.9px;height:1px;background:#8e8e8e"></div>
<div class="a" style="left:346.3px;top:836.5px;width:1009.9px;height:1px;background:#8e8e8e"></div>
<div class="a" style="left:346.3px;top:864.3px;width:1009.9px;height:1px;background:#8e8e8e"></div>
<div class="a" style="left:346.3px;top:892.1px;width:1009.9px;height:1px;background:#8e8e8e"></div>
<div class="a" style="left:346.3px;top:920.0px;width:1009.9px;height:1px;background:#8e8e8e"></div>
<div class="a" style="left:346.3px;top:947.8px;width:1009.9px;height:1px;background:#8e8e8e"></div>
<div class="a" style="left:346.3px;top:975.8px;width:1009.9px;height:1px;background:#8e8e8e"></div>
<div class="a" style="left:346.3px;top:1003.6px;width:1009.9px;height:1px;background:#8e8e8e"></div>
<div class="a" style="left:346.3px;top:1031.3px;width:1009.9px;height:1px;background:#8e8e8e"></div>
<div class="a" style="left:346.3px;top:1059.1px;width:1009.9px;height:1px;background:#8e8e8e"></div>
<div class="a" style="left:346.3px;top:1087.0px;width:1009.9px;height:1px;background:#8e8e8e"></div>
<div class="a" style="left:346.3px;top:1114.8px;width:1009.9px;height:1px;background:#8e8e8e"></div>
<div class="a" style="left:345.8px;top:742px;width:1px;height:374px;background:#8e8e8e"></div>
<div class="a" style="left:446.7px;top:775px;width:1px;height:341px;background:#8e8e8e"></div>
<div class="a" style="left:547.7px;top:775px;width:1px;height:341px;background:#8e8e8e"></div>
<div class="a" style="left:648.6px;top:775px;width:1px;height:341px;background:#8e8e8e"></div>
<div class="a" style="left:749.2px;top:775px;width:1px;height:341px;background:#8e8e8e"></div>
<div class="a" style="left:850.1px;top:775px;width:1px;height:341px;background:#8e8e8e"></div>
<div class="a" style="left:951.3px;top:775px;width:1px;height:341px;background:#8e8e8e"></div>
<div class="a" style="left:1051.9px;top:775px;width:1px;height:341px;background:#8e8e8e"></div>
<div class="a" style="left:1152.1px;top:775px;width:1px;height:341px;background:#8e8e8e"></div>
<div class="a" style="left:1252.7px;top:775px;width:1px;height:341px;background:#8e8e8e"></div>
<div class="a" style="left:1354.7px;top:742px;width:1px;height:374px;background:#8e8e8e"></div>
<div class="t" style="left:346.3px;width:1008.9px;text-align:center;top:750.01px;font-size:18.35px;font-weight:700;font-style:italic">Just another table</div>
<div class="t" style="left:346.3px;width:100.9px;text-align:center;top:790.56px;font-size:15.05px;font-weight:700;font-style:italic;">Posting</div>
<div class="t" style="left:346.3px;width:100.9px;text-align:center;top:807.26px;font-size:15.05px;font-weight:700;font-style:italic;">Date</div>
<div class="t" style="left:447.2px;width:101.0px;text-align:center;top:799.06px;font-size:15.05px;font-weight:700;">Debit</div>
<div class="t" style="left:548.2px;width:100.9px;text-align:center;top:782.36px;font-size:15.05px;font-weight:700;">Debit</div>
<div class="t" style="left:548.2px;width:100.9px;text-align:center;top:798.66px;font-size:15.05px;font-weight:700;">VAT</div>
<div class="t" style="left:548.2px;width:100.9px;text-align:center;top:814.86px;font-size:15.05px;font-weight:700;">Code</div>
<div class="t" style="left:649.1px;width:100.6px;text-align:center;top:799.06px;font-size:15.05px;font-weight:700;">Credit</div>
<div class="t" style="left:749.7px;width:100.9px;text-align:center;top:782.36px;font-size:15.05px;font-weight:700;">Credit</div>
<div class="t" style="left:749.7px;width:100.9px;text-align:center;top:798.66px;font-size:15.05px;font-weight:700;">VAT</div>
<div class="t" style="left:749.7px;width:100.9px;text-align:center;top:814.86px;font-size:15.05px;font-weight:700;">Code</div>
<div class="t" style="left:850.6px;width:101.2px;text-align:center;top:799.06px;font-size:15.05px;font-weight:700;">Department</div>
<div class="t" style="left:951.8px;width:100.6px;text-align:center;top:799.06px;font-size:15.05px;font-weight:700;">Project</div>
<div class="t" style="left:1052.4px;width:100.2px;text-align:center;top:790.56px;font-size:15.05px;font-weight:700;">Net</div>
<div class="t" style="left:1052.4px;width:100.2px;text-align:center;top:807.26px;font-size:15.05px;font-weight:700;">Amount</div>
<div class="t" style="left:1152.6px;width:100.6px;text-align:center;top:799.06px;font-size:15.05px;font-weight:700;">Amount</div>
<div class="t" style="left:1253.2px;width:102.0px;text-align:center;top:790.56px;font-size:15.05px;font-weight:700;">VAT</div>
<div class="t" style="left:1253.2px;width:102.0px;text-align:center;top:807.26px;font-size:15.05px;font-weight:700;">Amount</div>
<div class="t" style="left:654.6px;top:844.18px;font-size:14.67px">50001</div>
<div class="t" style="left:1158.1px;top:844.18px;font-size:14.67px">452.12</div>
<div class="t" style="left:351.8px;top:871.98px;font-size:14.67px">19-02</div>
<div class="t" style="left:452.7px;top:871.98px;font-size:14.67px">6401</div>
<div class="t" style="left:553.7px;top:871.98px;font-size:14.67px">1</div>
<div class="t" style="left:957.3px;top:871.98px;font-size:14.67px">Proj1</div>
<div class="t" style="left:1057.9px;top:871.98px;font-size:14.67px">100.02</div>
<div class="t" style="left:1158.1px;top:871.98px;font-size:14.67px">125.03</div>
<div class="t" style="left:1258.7px;top:871.98px;font-size:14.67px">25.01</div>
<div class="t" style="left:351.8px;top:899.78px;font-size:14.67px">19-02</div>
<div class="t" style="left:452.7px;top:899.78px;font-size:14.67px">1702</div>
<div class="t" style="left:553.7px;top:899.78px;font-size:14.67px">15</div>
<div class="t" style="left:957.3px;top:899.78px;font-size:14.67px">Proj2</div>
<div class="t" style="left:1057.9px;top:899.78px;font-size:14.67px">100.04</div>
<div class="t" style="left:1158.1px;top:899.78px;font-size:14.67px">115.05</div>
<div class="t" style="left:1258.7px;top:899.78px;font-size:14.67px">15.01</div>
<div class="t" style="left:351.8px;top:927.68px;font-size:14.67px">19-02</div>
<div class="t" style="left:452.7px;top:927.68px;font-size:14.67px">1703</div>
<div class="t" style="left:553.7px;top:927.68px;font-size:14.67px">12</div>
<div class="t" style="left:957.3px;top:927.68px;font-size:14.67px">Proj3</div>
<div class="t" style="left:1057.9px;top:927.68px;font-size:14.67px">100.02</div>
<div class="t" style="left:1158.1px;top:927.68px;font-size:14.67px">112.02</div>
<div class="t" style="left:1258.7px;top:927.68px;font-size:14.67px">12.00</div>
<div class="t" style="left:351.8px;top:955.48px;font-size:14.67px">19-02</div>
<div class="t" style="left:452.7px;top:955.48px;font-size:14.67px">1704</div>
<div class="t" style="left:553.7px;top:955.48px;font-size:14.67px">10</div>
<div class="t" style="left:957.3px;top:955.48px;font-size:14.67px">Proj4</div>
<div class="t" style="left:1057.9px;top:955.48px;font-size:14.67px">100.02</div>
<div class="t" style="left:1158.1px;top:955.48px;font-size:14.67px">100.02</div>
<div class="t" style="left:1258.7px;top:955.48px;font-size:14.67px">0.00</div>
<div class="t" style="left:351.8px;top:983.48px;font-size:14.67px">19-02</div>
<div class="t" style="left:452.7px;top:983.48px;font-size:14.67px">6402</div>
<div class="t" style="left:654.6px;top:983.48px;font-size:14.67px">1702</div>
<div class="t" style="left:856.1px;top:983.48px;font-size:14.67px">Dept2</div>
<div class="t" style="left:957.3px;top:983.48px;font-size:14.67px">Proj2</div>
<div class="t" style="left:1158.1px;top:983.48px;font-size:14.67px">66.68</div>
<div class="t" style="left:351.8px;top:1011.28px;font-size:14.67px">19-02</div>
<div class="t" style="left:452.7px;top:1011.28px;font-size:14.67px">6403</div>
<div class="t" style="left:654.6px;top:1011.28px;font-size:14.67px">1703</div>
<div class="t" style="left:856.1px;top:1011.28px;font-size:14.67px">Dept3</div>
<div class="t" style="left:957.3px;top:1011.28px;font-size:14.67px">Proj3</div>
<div class="t" style="left:1158.1px;top:1011.28px;font-size:14.67px">66.68</div>
<div class="t" style="left:351.8px;top:1038.98px;font-size:14.67px">19-02</div>
<div class="t" style="left:452.7px;top:1038.98px;font-size:14.67px">6404</div>
<div class="t" style="left:654.6px;top:1038.98px;font-size:14.67px">1704</div>
<div class="t" style="left:856.1px;top:1038.98px;font-size:14.67px">Dept4</div>
<div class="t" style="left:957.3px;top:1038.98px;font-size:14.67px">Proj4</div>
<div class="t" style="left:1158.1px;top:1038.98px;font-size:14.67px">66.68</div>
<div class="t" style="left:351.8px;top:1066.78px;font-size:14.67px">19-03</div>
<div class="t" style="left:452.7px;top:1066.78px;font-size:14.67px">6402</div>
<div class="t" style="left:654.6px;top:1066.78px;font-size:14.67px">1702</div>
<div class="t" style="left:856.1px;top:1066.78px;font-size:14.67px">Dept2</div>
<div class="t" style="left:957.3px;top:1066.78px;font-size:14.67px">Proj2</div>
<div class="t" style="left:1158.1px;top:1066.78px;font-size:14.67px">33.33</div>
<div class="t" style="left:351.8px;top:1094.68px;font-size:14.67px">19-03</div>
<div class="t" style="left:452.7px;top:1094.68px;font-size:14.67px">6403</div>
<div class="t" style="left:654.6px;top:1094.68px;font-size:14.67px">1703</div>
<div class="t" style="left:856.1px;top:1094.68px;font-size:14.67px">Dept3</div>
<div class="t" style="left:957.3px;top:1094.68px;font-size:14.67px">Proj3</div>
<div class="t" style="left:1158.1px;top:1094.68px;font-size:14.67px">33.34</div>
<!--/DOC2-->
<div id="scroll" class="a"></div>
<div id="thumb" class="a"></div>
<svg class="a" style="left:1471px;top:61px" width="18" height="20" viewBox="1471 61 18 20"><polygon points="1477,74.9 1486,74.9 1481.5,69.9" fill="#505050"/></svg>

</body></html>
